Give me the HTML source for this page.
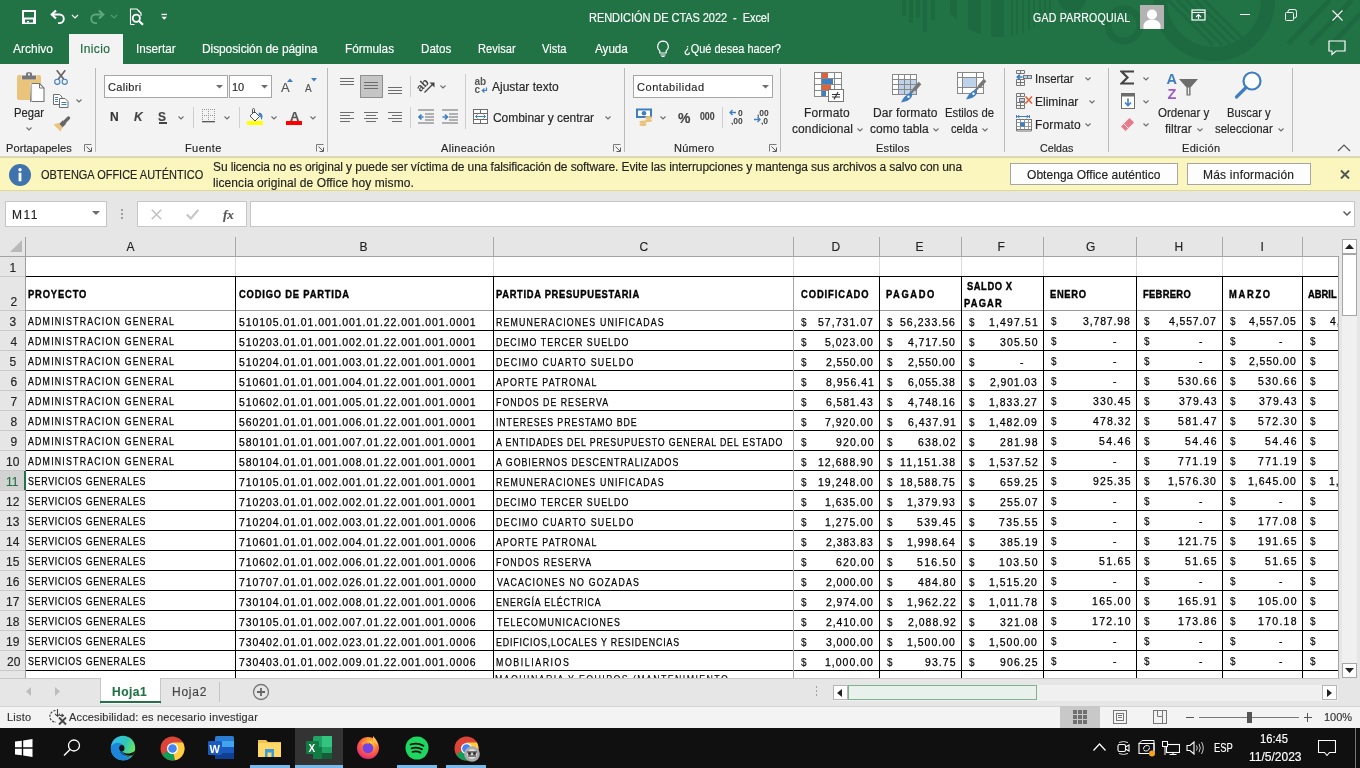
<!DOCTYPE html>
<html><head><meta charset="utf-8"><style>
html,body{margin:0;padding:0;width:1360px;height:768px;overflow:hidden;background:#fff;}
body{position:relative;font-family:"Liberation Sans",sans-serif;}
#root{position:absolute;left:0;top:0;width:1360px;height:768px;overflow:hidden;will-change:transform;}
#root>div,#root>span,#root>svg{position:absolute;box-sizing:border-box;}
span{white-space:pre;}
.k{-webkit-text-stroke:0.25px #000;}
span{-webkit-text-stroke:0.15px currentColor;}
.kb{-webkit-text-stroke:0.4px #000;}

</style></head><body><div id="root">
<div style="left:0px;top:0px;width:1360px;height:64px;background:#217346"></div>
<svg style="left:880px;top:0px;" width="480" height="64" viewBox="0 0 480 64"><rect x="22" y="0" width="4" height="16" fill="#1e6a40"/><rect x="29" y="0" width="4" height="23" fill="#1e6a40"/><rect x="36" y="0" width="4" height="17" fill="#1e6a40"/><rect x="43" y="0" width="4" height="32" fill="#1e6a40"/><rect x="51" y="0" width="4" height="20" fill="#1e6a40"/><defs><clipPath id="cp1"><circle cx="120" cy="-27" r="64"/></clipPath></defs><g clip-path="url(#cp1)"><rect x="70" y="0" width="7" height="40" fill="#1e6a40"/><rect x="88" y="0" width="13" height="40" fill="#1e6a40"/><rect x="111" y="0" width="13" height="40" fill="#1e6a40"/><rect x="131" y="0" width="2" height="40" fill="#1e6a40"/><rect x="136" y="0" width="2" height="40" fill="#1e6a40"/><rect x="142" y="0" width="2" height="40" fill="#1e6a40"/><rect x="148" y="0" width="2" height="40" fill="#1e6a40"/><rect x="153" y="0" width="2" height="40" fill="#1e6a40"/><rect x="159" y="0" width="2" height="40" fill="#1e6a40"/><rect x="164" y="0" width="2" height="40" fill="#1e6a40"/><rect x="169" y="0" width="2" height="40" fill="#1e6a40"/></g><circle cx="192" cy="-2" r="14" fill="#1e6a40"/><circle cx="244" cy="25" r="16" fill="none" stroke="#1e6a40" stroke-width="7"/><circle cx="334" cy="0" r="54" fill="none" stroke="#1e6a40" stroke-width="14"/><line x1="288" y1="0" x2="333" y2="45" stroke="#1e6a40" stroke-width="3"/><line x1="297" y1="0" x2="342" y2="45" stroke="#1e6a40" stroke-width="3"/><line x1="306" y1="0" x2="351" y2="45" stroke="#1e6a40" stroke-width="3"/><line x1="315" y1="0" x2="360" y2="45" stroke="#1e6a40" stroke-width="3"/><line x1="324" y1="0" x2="369" y2="45" stroke="#1e6a40" stroke-width="3"/><line x1="450" y1="0" x2="408" y2="44" stroke="#1e6a40" stroke-width="5"/><line x1="472" y1="0" x2="430" y2="44" stroke="#1e6a40" stroke-width="5"/><line x1="494" y1="0" x2="452" y2="44" stroke="#1e6a40" stroke-width="5"/></svg>
<svg style="left:22px;top:10px;" width="14" height="14" viewBox="0 0 14 14"><rect x="0" y="0" width="14" height="14" rx="0.5" fill="#fff"/><rect x="2" y="2" width="10" height="5.5" fill="#217346"/><rect x="3" y="9.5" width="8" height="3" fill="#217346"/><rect x="5" y="11" width="2" height="1.5" fill="#fff"/></svg>
<svg style="left:50px;top:9px;" width="16" height="15" viewBox="0 0 16 15"><path d="M3 5.5h6.5a4.3 4.3 0 0 1 0 8.6h-1.5" fill="none" stroke="#fff" stroke-width="1.9"/><path d="M6 1.5L1.8 5.5L6 9.5" fill="none" stroke="#fff" stroke-width="2.2"/></svg>
<svg style="left:71px;top:14px;" width="8" height="5" viewBox="0 0 8 5"><path d="M1 1l3 3l3-3" fill="none" stroke="#fff" stroke-width="1.2"/></svg>
<svg style="left:89px;top:9px;" width="16" height="15" viewBox="0 0 16 15"><path d="M13 5.5h-6.5a4.3 4.3 0 0 0 0 8.6h1.5" fill="none" stroke="#5ea77e" stroke-width="1.9"/><path d="M10 1.5L14.2 5.5L10 9.5" fill="none" stroke="#5ea77e" stroke-width="2.2"/></svg>
<svg style="left:110px;top:14px;" width="8" height="5" viewBox="0 0 8 5"><path d="M1 1l3 3l3-3" fill="none" stroke="#4f9a70" stroke-width="1.2"/></svg>
<svg style="left:129px;top:8px;" width="16" height="18" viewBox="0 0 16 18"><path d="M1.5 16.5v-15.5h6.5l4 4v3" fill="none" stroke="#fff" stroke-width="1.1"/><path d="M1.5 16.5h4" stroke="#fff" stroke-width="1.1"/><path d="M8.5 1.5l1.5 2.5M10 2.5l1.5 3" stroke="#fff" stroke-width="0.9"/><circle cx="7.3" cy="10.3" r="3.6" fill="none" stroke="#fff" stroke-width="1.8"/><path d="M10 13l4 3.8" stroke="#fff" stroke-width="2.2"/></svg>
<svg style="left:161px;top:13px;" width="7" height="8" viewBox="0 0 7 8"><rect x="0.5" y="0.8" width="5.5" height="1.3" fill="#fff"/><path d="M0.5 3.8h5.5l-2.75 3z" fill="#fff"/></svg>
<span style="left:589.08px;top:12px;font-size:12px;line-height:12px;color:#ffffff;letter-spacing:-0.079px;transform:scaleX(0.920);transform-origin:0 0;">RENDICIÓN DE CTAS 2022  -  Excel</span>
<span style="left:1033.00px;top:12px;font-size:12px;line-height:12px;color:#ffffff;letter-spacing:0.248px;transform:scaleX(0.880);transform-origin:0 0;">GAD PARROQUIAL</span>
<div style="left:1140px;top:5px;width:24px;height:24px;background:#b3b3b3"></div>
<svg style="left:1140px;top:5px;" width="24" height="24" viewBox="0 0 24 24"><circle cx="12" cy="9.5" r="5" fill="#fff"/><path d="M3.5 24v-3c0-4 4-6.5 8.5-6.5s8.5 2.5 8.5 6.5v3z" fill="#fff"/></svg>
<svg style="left:1191px;top:9px;" width="15" height="12" viewBox="0 0 15 12"><rect x="1" y="1" width="13" height="10" fill="none" stroke="#fff" stroke-width="1.2"/><path d="M1 3.5h13" stroke="#fff" stroke-width="1"/><path d="M7.5 10V5.5M5 8l2.5-2.5L10 8" fill="none" stroke="#fff" stroke-width="1.1"/></svg>
<div style="left:1240px;top:14px;width:10px;height:1px;background:#fff"></div>
<svg style="left:1285px;top:9px;" width="12" height="12" viewBox="0 0 12 12"><rect x="0.5" y="3.5" width="8" height="8" rx="1" fill="none" stroke="#fff" stroke-width="1"/><path d="M3 3.5v-1a2 2 0 0 1 2-2h4.5a2 2 0 0 1 2 2v4.5a2 2 0 0 1-2 2h-1" fill="none" stroke="#fff" stroke-width="1"/></svg>
<svg style="left:1332px;top:10px;" width="11" height="11" viewBox="0 0 11 11"><path d="M0.5 0.5l10 10M10.5 0.5l-10 10" stroke="#fff" stroke-width="1.1"/></svg>
<div style="left:69px;top:34px;width:54px;height:30px;background:#f3f3f3"></div>
<span style="left:13.00px;top:43px;font-size:12px;line-height:12px;color:#ffffff;">Archivo</span>
<span style="left:136.03px;top:43px;font-size:12px;line-height:12px;color:#ffffff;transform:scaleX(0.975);transform-origin:0 0;">Insertar</span>
<span style="left:202.00px;top:43px;font-size:12px;line-height:12px;color:#ffffff;letter-spacing:-0.100px;">Disposición de página</span>
<span style="left:345.02px;top:43px;font-size:12px;line-height:12px;color:#ffffff;transform:scaleX(0.980);transform-origin:0 0;">Fórmulas</span>
<span style="left:421.03px;top:43px;font-size:12px;line-height:12px;color:#ffffff;transform:scaleX(0.967);transform-origin:0 0;">Datos</span>
<span style="left:478.07px;top:43px;font-size:12px;line-height:12px;color:#ffffff;transform:scaleX(0.925);transform-origin:0 0;">Revisar</span>
<span style="left:542.00px;top:43px;font-size:12px;line-height:12px;color:#ffffff;transform:scaleX(0.926);transform-origin:0 0;">Vista</span>
<span style="left:595.00px;top:43px;font-size:12px;line-height:12px;color:#ffffff;transform:scaleX(0.971);transform-origin:0 0;">Ayuda</span>
<span style="left:80.00px;top:43px;font-size:12px;line-height:12px;color:#1e6b41;letter-spacing:0.400px;">Inicio</span>
<svg style="left:656px;top:40px;" width="14" height="17" viewBox="0 0 14 17"><path d="M7 1.2a5.3 5.3 0 0 0-3.2 9.5v2.3h6.4v-2.3A5.3 5.3 0 0 0 7 1.2z" fill="none" stroke="#fff" stroke-width="1.2"/><path d="M4.5 15h5M5.5 16.5h3" stroke="#fff" stroke-width="1.1"/></svg>
<span style="left:684.09px;top:43px;font-size:12px;line-height:12px;color:#ffffff;transform:scaleX(0.914);transform-origin:0 0;">¿Qué desea hacer?</span>
<svg style="left:1328px;top:40px;" width="18" height="16" viewBox="0 0 18 16"><path d="M1 1h16v10h-9l-4 3.5v-3.5h-3z" fill="none" stroke="#fff" stroke-width="1.2"/></svg>
<div style="left:0px;top:64px;width:1360px;height:92px;background:#f3f3f3"></div>
<div style="left:0px;top:156px;width:1360px;height:1px;background:#d5d5d5"></div>
<svg style="left:16px;top:71px;" width="30" height="32" viewBox="0 0 30 32"><rect x="1" y="4" width="24" height="25" rx="2" fill="#ebc47c"/><path d="M5.5 3.5h15v5h-15z" fill="#f3f3f3"/><path d="M6 4.5h14v4h-14z" fill="#777"/><rect x="10" y="1.2" width="6" height="4.5" rx="1.5" fill="#777"/><rect x="12" y="2.6" width="2" height="1.8" fill="#f3f3f3"/><path d="M15.5 12.5h8l4.5 4.5v13.5h-12.5z" fill="#fff" stroke="#777" stroke-width="1.1"/><path d="M23.5 12.5v4.5h4.5" fill="none" stroke="#777" stroke-width="1"/><path d="M15 12v19.5h-1" stroke="#f3f3f3" stroke-width="1"/></svg>
<span style="left:14.06px;top:107px;font-size:12px;line-height:12px;color:#262626;transform:scaleX(0.935);transform-origin:0 0;">Pegar</span>
<svg style="left:26px;top:127px;" width="6" height="4" viewBox="0 0 6 4"><path d="M0.5 0.5l2.5 2.5l2.5-2.5" fill="none" stroke="#6d6d6d" stroke-width="1.1"/></svg>
<svg style="left:53px;top:69px;" width="16" height="16" viewBox="0 0 16 16"><path d="M5.2 10.3L12.3 1.3M10.8 10.3L3.7 1.3" fill="none" stroke="#666" stroke-width="1.7"/><circle cx="4.3" cy="12.8" r="2.6" fill="none" stroke="#3f7fc0" stroke-width="1.1"/><circle cx="11.7" cy="12.8" r="2.6" fill="none" stroke="#3f7fc0" stroke-width="1.1"/></svg>
<svg style="left:53px;top:94px;" width="16" height="14" viewBox="0 0 16 14"><path d="M0.5 0.5h6l2.5 2.5v7.5h-8.5z" fill="#fff" stroke="#6d6d6d" stroke-width="1"/><path d="M6.5 4.5h5.5l3 3v6h-8.5z" fill="#fff" stroke="#6d6d6d" stroke-width="1"/><rect x="2" y="3" width="3" height="1" fill="#3f7fc0"/><rect x="2" y="5" width="3" height="1" fill="#3f7fc0"/><rect x="2" y="7" width="3" height="1" fill="#3f7fc0"/><rect x="8.5" y="8" width="5" height="1" fill="#3f7fc0"/><rect x="8.5" y="10" width="5" height="1" fill="#3f7fc0"/></svg>
<svg style="left:76px;top:99px;" width="6" height="4" viewBox="0 0 6 4"><path d="M0.5 0.5l2.5 2.5l2.5-2.5" fill="none" stroke="#6d6d6d" stroke-width="1.1"/></svg>
<svg style="left:53px;top:116px;" width="18" height="16" viewBox="0 0 18 16"><path d="M12 5.5L15.5 2" stroke="#666" stroke-width="3.2" stroke-linecap="round"/><path d="M7.5 10L11.5 6" stroke="#666" stroke-width="4.6"/><path d="M0.5 8.5L5.5 7L9.5 11L7.5 15.5z" fill="#ebc47c"/></svg>
<span style="left:6.00px;top:143px;font-size:11px;line-height:11px;color:#262626;letter-spacing:0.091px;">Portapapeles</span>
<svg style="left:84px;top:144px;" width="8" height="8" viewBox="0 0 8 8"><path d="M0.5 7.5V0.5h7" fill="none" stroke="#7a7a7a" stroke-width="1"/><path d="M2.5 2.5l4.5 4.5M7.5 3.5v4h-4" fill="none" stroke="#5a5a5a" stroke-width="1"/></svg>
<div style="left:95px;top:68px;width:1px;height:84px;background:#b9b9b9"></div>
<div style="left:104px;top:75px;width:124px;height:23px;background:#fff;border:1px solid #a6a6a6"></div>
<span style="left:108.00px;top:82px;font-size:11px;line-height:11px;color:#262626;letter-spacing:0.333px;">Calibri</span>
<svg style="left:216px;top:85px;" width="7" height="4" viewBox="0 0 7 4"><path d="M0 0h7l-3.5 3.5z" fill="#6d6d6d"/></svg>
<div style="left:229px;top:75px;width:43px;height:23px;background:#fff;border:1px solid #a6a6a6"></div>
<span style="left:232.00px;top:82px;font-size:11px;line-height:11px;color:#262626;">10</span>
<svg style="left:261px;top:85px;" width="7" height="4" viewBox="0 0 7 4"><path d="M0 0h7l-3.5 3.5z" fill="#6d6d6d"/></svg>
<span style="left:281.00px;top:81px;font-size:13px;line-height:13px;color:#555;">A</span>
<svg style="left:287px;top:78px;" width="7" height="4" viewBox="0 0 7 4"><path d="M0 4h6l-3-3.5z" fill="#3f7fc0"/></svg>
<span style="left:305.00px;top:84px;font-size:10px;line-height:10px;color:#555;">A</span>
<svg style="left:311px;top:78px;" width="7" height="4" viewBox="0 0 7 4"><path d="M0 0h6l-3 3.5z" fill="#3f7fc0"/></svg>
<span style="left:110.00px;top:111px;font-size:12px;line-height:12px;color:#333;font-weight:700;">N</span>
<span style="left:134.00px;top:111px;font-size:12px;line-height:12px;color:#444;font-weight:700;font-style:italic;">K</span>
<span style="left:158.00px;top:111px;font-size:12px;line-height:12px;color:#444;font-weight:700;">S</span>
<div style="left:159px;top:122px;width:8px;height:1.5px;background:#444"></div>
<svg style="left:178px;top:116px;" width="6" height="4" viewBox="0 0 6 4"><path d="M0.5 0.5l2.5 2.5l2.5-2.5" fill="none" stroke="#6d6d6d" stroke-width="1.1"/></svg>
<div style="left:193px;top:107px;width:1px;height:21px;background:#cfcfcf"></div>
<svg style="left:202px;top:109px;" width="13" height="14" viewBox="0 0 13 14"><rect x="0" y="0" width="1" height="1" fill="#9a9a9a"/><rect x="0" y="6" width="1" height="1" fill="#9a9a9a"/><rect x="2" y="0" width="1" height="1" fill="#9a9a9a"/><rect x="2" y="6" width="1" height="1" fill="#9a9a9a"/><rect x="4" y="0" width="1" height="1" fill="#9a9a9a"/><rect x="4" y="6" width="1" height="1" fill="#9a9a9a"/><rect x="6" y="0" width="1" height="1" fill="#9a9a9a"/><rect x="6" y="6" width="1" height="1" fill="#9a9a9a"/><rect x="8" y="0" width="1" height="1" fill="#9a9a9a"/><rect x="8" y="6" width="1" height="1" fill="#9a9a9a"/><rect x="10" y="0" width="1" height="1" fill="#9a9a9a"/><rect x="10" y="6" width="1" height="1" fill="#9a9a9a"/><rect x="12" y="0" width="1" height="1" fill="#9a9a9a"/><rect x="12" y="6" width="1" height="1" fill="#9a9a9a"/><rect x="0" y="2" width="1" height="1" fill="#9a9a9a"/><rect x="0" y="4" width="1" height="1" fill="#9a9a9a"/><rect x="0" y="6" width="1" height="1" fill="#9a9a9a"/><rect x="0" y="8" width="1" height="1" fill="#9a9a9a"/><rect x="0" y="10" width="1" height="1" fill="#9a9a9a"/><rect x="6" y="2" width="1" height="1" fill="#9a9a9a"/><rect x="6" y="4" width="1" height="1" fill="#9a9a9a"/><rect x="6" y="6" width="1" height="1" fill="#9a9a9a"/><rect x="6" y="8" width="1" height="1" fill="#9a9a9a"/><rect x="6" y="10" width="1" height="1" fill="#9a9a9a"/><rect x="12" y="2" width="1" height="1" fill="#9a9a9a"/><rect x="12" y="4" width="1" height="1" fill="#9a9a9a"/><rect x="12" y="6" width="1" height="1" fill="#9a9a9a"/><rect x="12" y="8" width="1" height="1" fill="#9a9a9a"/><rect x="12" y="10" width="1" height="1" fill="#9a9a9a"/><rect x="0" y="12" width="13" height="1.3" fill="#555"/></svg>
<svg style="left:224px;top:116px;" width="6" height="4" viewBox="0 0 6 4"><path d="M0.5 0.5l2.5 2.5l2.5-2.5" fill="none" stroke="#6d6d6d" stroke-width="1.1"/></svg>
<div style="left:239px;top:107px;width:1px;height:21px;background:#cfcfcf"></div>
<svg style="left:247px;top:108px;" width="17" height="13" viewBox="0 0 17 13"><path d="M7.5 3.5l5 5l-4.5 4.5l-5-5z" fill="#fff" stroke="#555" stroke-width="1"/><path d="M5.5 6V1.5q0-1 1-1t1 1v3.5" fill="none" stroke="#555" stroke-width="1"/><path d="M12 4.5q3.5 0.5 3.5 4q0 2-1.5 3.5q0.5-3-2.5-5.5z" fill="#3f7fc0"/></svg>
<div style="left:247px;top:121px;width:16px;height:4px;background:#ffff00"></div>
<svg style="left:271px;top:116px;" width="6" height="4" viewBox="0 0 6 4"><path d="M0.5 0.5l2.5 2.5l2.5-2.5" fill="none" stroke="#6d6d6d" stroke-width="1.1"/></svg>
<span style="left:290.00px;top:110px;font-size:13px;line-height:13px;color:#555;font-weight:700;">A</span>
<div style="left:286px;top:121px;width:16px;height:4px;background:#ff0000"></div>
<svg style="left:310px;top:116px;" width="6" height="4" viewBox="0 0 6 4"><path d="M0.5 0.5l2.5 2.5l2.5-2.5" fill="none" stroke="#6d6d6d" stroke-width="1.1"/></svg>
<span style="left:185.00px;top:143px;font-size:11px;line-height:11px;color:#262626;letter-spacing:0.400px;">Fuente</span>
<svg style="left:316px;top:144px;" width="8" height="8" viewBox="0 0 8 8"><path d="M0.5 7.5V0.5h7" fill="none" stroke="#7a7a7a" stroke-width="1"/><path d="M2.5 2.5l4.5 4.5M7.5 3.5v4h-4" fill="none" stroke="#5a5a5a" stroke-width="1"/></svg>
<div style="left:327px;top:68px;width:1px;height:84px;background:#b9b9b9"></div>
<div style="left:340px;top:78px;width:14px;height:1px;background:#6d6d6d"></div>
<div style="left:340px;top:81px;width:14px;height:1px;background:#6d6d6d"></div>
<div style="left:340px;top:84px;width:14px;height:1px;background:#6d6d6d"></div>
<div style="left:360px;top:75px;width:23px;height:23px;background:#c5c5c5;border:1px solid #8f8f8f"></div>
<div style="left:364px;top:82px;width:14px;height:1px;background:#6d6d6d"></div>
<div style="left:364px;top:85px;width:14px;height:1px;background:#6d6d6d"></div>
<div style="left:364px;top:88px;width:14px;height:1px;background:#6d6d6d"></div>
<div style="left:388px;top:87px;width:14px;height:1px;background:#6d6d6d"></div>
<div style="left:388px;top:90px;width:14px;height:1px;background:#6d6d6d"></div>
<div style="left:388px;top:93px;width:14px;height:1px;background:#6d6d6d"></div>
<div style="left:410px;top:76px;width:1px;height:21px;background:#cfcfcf"></div>
<svg style="left:414px;top:74px;" width="24" height="22" viewBox="0 0 24 22"><g transform="rotate(-45 9 10)"><text x="1.5" y="14" font-family="Liberation Sans" font-weight="bold" font-size="11" fill="#444">ab</text></g><path d="M10.5 18.5L19.5 9.5" stroke="#444" stroke-width="1.2"/><path d="M15.5 8.5h5v5z" fill="#444"/></svg>
<svg style="left:440px;top:85px;" width="6" height="4" viewBox="0 0 6 4"><path d="M0.5 0.5l2.5 2.5l2.5-2.5" fill="none" stroke="#6d6d6d" stroke-width="1.1"/></svg>
<div style="left:465px;top:74px;width:1px;height:55px;background:#cfcfcf"></div>
<div style="left:340px;top:112px;width:14px;height:1px;background:#6d6d6d"></div>
<div style="left:340px;top:115px;width:10px;height:1px;background:#6d6d6d"></div>
<div style="left:340px;top:118px;width:14px;height:1px;background:#6d6d6d"></div>
<div style="left:340px;top:121px;width:10px;height:1px;background:#6d6d6d"></div>
<div style="left:364px;top:112px;width:14px;height:1px;background:#6d6d6d"></div>
<div style="left:366px;top:115px;width:10px;height:1px;background:#6d6d6d"></div>
<div style="left:364px;top:118px;width:14px;height:1px;background:#6d6d6d"></div>
<div style="left:366px;top:121px;width:10px;height:1px;background:#6d6d6d"></div>
<div style="left:388px;top:112px;width:14px;height:1px;background:#6d6d6d"></div>
<div style="left:392px;top:115px;width:10px;height:1px;background:#6d6d6d"></div>
<div style="left:388px;top:118px;width:14px;height:1px;background:#6d6d6d"></div>
<div style="left:392px;top:121px;width:10px;height:1px;background:#6d6d6d"></div>
<div style="left:410px;top:107px;width:1px;height:21px;background:#cfcfcf"></div>
<svg style="left:418px;top:109px;" width="17" height="15" viewBox="0 0 17 15"><path d="M0 1h16M7 5h9M7 8h9M7 11h9M0 14h16" stroke="#6d6d6d" stroke-width="1"/><path d="M5.5 8H1M3.5 5.5L1 8l2.5 2.5" fill="none" stroke="#3f7fc0" stroke-width="1.6"/></svg>
<svg style="left:442px;top:109px;" width="17" height="15" viewBox="0 0 17 15"><path d="M0 1h16M7 5h9M7 8h9M7 11h9M0 14h16" stroke="#6d6d6d" stroke-width="1"/><path d="M0.5 8H5M3 5.5L5.5 8L3 10.5" fill="none" stroke="#3f7fc0" stroke-width="1.6"/></svg>
<svg style="left:474px;top:76px;" width="15" height="18" viewBox="0 0 15 18"><text x="0.5" y="9" font-family="Liberation Sans" font-weight="bold" font-size="10" fill="#555">ab</text><text x="0.5" y="16.8" font-family="Liberation Sans" font-weight="bold" font-size="10" fill="#555">c</text><path d="M12.5 11.5v3h-3.5" fill="none" stroke="#3f7fc0" stroke-width="1.2"/><path d="M10.5 12.5l-2.2 2l2.2 2" fill="none" stroke="#3f7fc0" stroke-width="1.2"/></svg>
<span style="left:492.00px;top:81px;font-size:12px;line-height:12px;color:#262626;">Ajustar texto</span>
<svg style="left:473px;top:109px;" width="15" height="15" viewBox="0 0 15 15"><rect x="0.5" y="0.5" width="14" height="14" fill="#fff" stroke="#6d6d6d" stroke-width="1"/><path d="M0.5 4.5h14M0.5 10.5h14M7.5 0.5v4M7.5 10.5v4" stroke="#6d6d6d" stroke-width="1"/><path d="M2.5 7.5h10M4.5 5.5l-2 2l2 2M10.5 5.5l2 2l-2 2" fill="none" stroke="#3f7fc0" stroke-width="1"/></svg>
<span style="left:493.00px;top:112px;font-size:12px;line-height:12px;color:#262626;letter-spacing:-0.059px;">Combinar y centrar</span>
<svg style="left:605px;top:116px;" width="6" height="4" viewBox="0 0 6 4"><path d="M0.5 0.5l2.5 2.5l2.5-2.5" fill="none" stroke="#6d6d6d" stroke-width="1.1"/></svg>
<span style="left:441.00px;top:143px;font-size:11px;line-height:11px;color:#262626;letter-spacing:0.333px;">Alineación</span>
<svg style="left:613px;top:144px;" width="8" height="8" viewBox="0 0 8 8"><path d="M0.5 7.5V0.5h7" fill="none" stroke="#7a7a7a" stroke-width="1"/><path d="M2.5 2.5l4.5 4.5M7.5 3.5v4h-4" fill="none" stroke="#5a5a5a" stroke-width="1"/></svg>
<div style="left:624px;top:68px;width:1px;height:84px;background:#b9b9b9"></div>
<div style="left:633px;top:75px;width:140px;height:23px;background:#fff;border:1px solid #a6a6a6"></div>
<span style="left:637.00px;top:82px;font-size:11px;line-height:11px;color:#262626;letter-spacing:0.545px;">Contabilidad</span>
<svg style="left:762px;top:85px;" width="7" height="4" viewBox="0 0 7 4"><path d="M0 0h7l-3.5 3.5z" fill="#6d6d6d"/></svg>
<svg style="left:636px;top:108px;" width="17" height="18" viewBox="0 0 17 18"><rect x="0" y="0.5" width="16" height="9.5" fill="#3f7fc0"/><rect x="2" y="2.5" width="12" height="5.5" fill="#fff"/><circle cx="8" cy="5.2" r="2.3" fill="#3f7fc0"/><ellipse cx="12.5" cy="9.5" rx="3.5" ry="1.5" fill="#ebc27a"/><ellipse cx="12.5" cy="12.5" rx="3.5" ry="1.5" fill="#ebc27a"/><ellipse cx="7" cy="14" rx="3.5" ry="1.5" fill="#ebc27a"/><ellipse cx="7" cy="16.5" rx="3.5" ry="1.5" fill="#ebc27a"/></svg>
<svg style="left:660px;top:116px;" width="6" height="4" viewBox="0 0 6 4"><path d="M0.5 0.5l2.5 2.5l2.5-2.5" fill="none" stroke="#6d6d6d" stroke-width="1.1"/></svg>
<span style="left:678.00px;top:111px;font-size:14px;line-height:14px;color:#444;font-weight:700;">%</span>
<span style="left:700.00px;top:112px;font-size:10px;line-height:10px;color:#444;font-weight:700;transform:scaleX(0.875);transform-origin:0 0;">000</span>
<div style="left:722px;top:107px;width:1px;height:21px;background:#cfcfcf"></div>
<svg style="left:729px;top:109px;" width="16" height="16" viewBox="0 0 16 16"><text x="9" y="7" font-family="Liberation Sans" font-weight="bold" font-size="8.5" fill="#444">0</text><text x="2" y="14.5" font-family="Liberation Sans" font-weight="bold" font-size="8.5" fill="#444">,00</text><path d="M7 3.5H1M3.5 1L1 3.5L3.5 6" fill="none" stroke="#3f7fc0" stroke-width="1.3"/></svg>
<svg style="left:753px;top:109px;" width="16" height="16" viewBox="0 0 16 16"><text x="4" y="7" font-family="Liberation Sans" font-weight="bold" font-size="8.5" fill="#444">,00</text><text x="8" y="14.5" font-family="Liberation Sans" font-weight="bold" font-size="8.5" fill="#444">,0</text><path d="M1 10.5h6M4.5 8L7 10.5L4.5 13" fill="none" stroke="#3f7fc0" stroke-width="1.3"/></svg>
<span style="left:674.00px;top:143px;font-size:11px;line-height:11px;color:#262626;letter-spacing:0.200px;">Número</span>
<svg style="left:769px;top:144px;" width="8" height="8" viewBox="0 0 8 8"><path d="M0.5 7.5V0.5h7" fill="none" stroke="#7a7a7a" stroke-width="1"/><path d="M2.5 2.5l4.5 4.5M7.5 3.5v4h-4" fill="none" stroke="#5a5a5a" stroke-width="1"/></svg>
<div style="left:780px;top:68px;width:1px;height:84px;background:#b9b9b9"></div>
<svg style="left:814px;top:72px;" width="31" height="31" viewBox="0 0 31 31"><rect x="0.5" y="0.5" width="27" height="24" fill="#fff" stroke="#888"/><path d="M7.5 0.5v24M20.5 0.5v24M0.5 6.5h27M0.5 12.5h27M0.5 18.5h27" stroke="#888"/><rect x="8" y="1" width="6" height="5" fill="#e0623b"/><rect x="8" y="7" width="11" height="5" fill="#3f7fc0"/><rect x="8" y="13" width="9" height="5" fill="#e0623b"/><rect x="8" y="19" width="4" height="5" fill="#3f7fc0"/><rect x="14.5" y="17.5" width="15" height="12" fill="#fff" stroke="#777"/><path d="M18 22.5h8M18 25h8M24 20l-4 7.5" stroke="#333" stroke-width="1.1"/></svg>
<span style="left:804.00px;top:107px;font-size:12px;line-height:12px;color:#262626;letter-spacing:0.167px;">Formato</span>
<span style="left:792.00px;top:123px;font-size:12px;line-height:12px;color:#262626;letter-spacing:0.100px;">condicional</span>
<svg style="left:857px;top:128px;" width="6" height="4" viewBox="0 0 6 4"><path d="M0.5 0.5l2.5 2.5l2.5-2.5" fill="none" stroke="#6d6d6d" stroke-width="1.1"/></svg>
<svg style="left:892px;top:74px;" width="31" height="30" viewBox="0 0 31 30"><rect x="0.5" y="0.5" width="24" height="20" fill="#fff" stroke="#888"/><rect x="7" y="5.5" width="17" height="14.5" fill="#bcd3ea"/><path d="M6.5 0.5v20M12.5 0.5v20M18.5 0.5v20M0.5 5.5h24M0.5 10.5h24M0.5 15.5h24" stroke="#888"/><path d="M22 16L28 9" stroke="#777" stroke-width="3.5"/><path d="M18 20L22 15.5" stroke="#777" stroke-width="2.2"/><path d="M18.5 18.5q3 2 0.5 5.5q-3 3.5-10 4.5q3-7 9.5-10z" fill="#3f7fc0"/><circle cx="16.5" cy="22.8" r="1.2" fill="#fff"/></svg>
<span style="left:873.00px;top:107px;font-size:12px;line-height:12px;color:#262626;letter-spacing:0.100px;">Dar formato</span>
<span style="left:870.00px;top:123px;font-size:12px;line-height:12px;color:#262626;">como tabla</span>
<svg style="left:933px;top:128px;" width="6" height="4" viewBox="0 0 6 4"><path d="M0.5 0.5l2.5 2.5l2.5-2.5" fill="none" stroke="#6d6d6d" stroke-width="1.1"/></svg>
<svg style="left:957px;top:72px;" width="31" height="30" viewBox="0 0 31 30"><rect x="0.5" y="0.5" width="26" height="21" fill="#fff" stroke="#888"/><rect x="6" y="5" width="14" height="10" fill="#bcd3ea"/><path d="M5.5 0.5v21M19.5 0.5v21M0.5 5.5h26M0.5 15.5h26" stroke="#888"/><path d="M22 15L28 8" stroke="#777" stroke-width="3.5"/><path d="M18 19L22 14.5" stroke="#777" stroke-width="2.2"/><path d="M18.5 17.5q3 2 0.5 5.5q-3 3.5-10 4.5q3-7 9.5-10z" fill="#3f7fc0"/><circle cx="16.5" cy="21.8" r="1.2" fill="#fff"/></svg>
<span style="left:945.06px;top:107px;font-size:12px;line-height:12px;color:#262626;transform:scaleX(0.941);transform-origin:0 0;">Estilos de</span>
<span style="left:951.00px;top:123px;font-size:12px;line-height:12px;color:#262626;transform:scaleX(0.931);transform-origin:0 0;">celda</span>
<svg style="left:982px;top:128px;" width="6" height="4" viewBox="0 0 6 4"><path d="M0.5 0.5l2.5 2.5l2.5-2.5" fill="none" stroke="#6d6d6d" stroke-width="1.1"/></svg>
<span style="left:876.00px;top:143px;font-size:11px;line-height:11px;color:#262626;letter-spacing:0.167px;">Estilos</span>
<div style="left:1004px;top:68px;width:1px;height:84px;background:#b9b9b9"></div>
<svg style="left:1016px;top:70px;" width="17" height="17" viewBox="0 0 17 17"><path d="M0.5 0.5h8v3h-8zM4.5 0.5v3M0.5 9.5h8v6h-8zM0.5 12.5h8M4.5 9.5v6" fill="none" stroke="#777"/><rect x="7.5" y="5.5" width="8" height="3" fill="#bcd3ea" stroke="#777"/><path d="M11.5 5.5v3" stroke="#777"/><path d="M6.5 7H1.5M3.8 4.6L1.3 7l2.5 2.4" fill="none" stroke="#3f7fc0" stroke-width="1.7"/></svg>
<span style="left:1035.05px;top:73px;font-size:12px;line-height:12px;color:#262626;transform:scaleX(0.950);transform-origin:0 0;">Insertar</span>
<svg style="left:1085px;top:77px;" width="6" height="4" viewBox="0 0 6 4"><path d="M0.5 0.5l2.5 2.5l2.5-2.5" fill="none" stroke="#6d6d6d" stroke-width="1.1"/></svg>
<svg style="left:1016px;top:93px;" width="17" height="17" viewBox="0 0 17 17"><path d="M0.5 0.5h8v3h-8zM4.5 0.5v3M0.5 9.5h8v6h-8zM0.5 12.5h8M4.5 9.5v6M0.5 3.5v6" fill="none" stroke="#777"/><rect x="3.5" y="5.5" width="5" height="3" fill="#bcd3ea" stroke="#777"/><path d="M9.5 3.5l6.5 7M16 3.5l-6.5 7" stroke="#e0623b" stroke-width="1.6"/></svg>
<span style="left:1035.00px;top:96px;font-size:12px;line-height:12px;color:#262626;">Eliminar</span>
<svg style="left:1089px;top:100px;" width="6" height="4" viewBox="0 0 6 4"><path d="M0.5 0.5l2.5 2.5l2.5-2.5" fill="none" stroke="#6d6d6d" stroke-width="1.1"/></svg>
<svg style="left:1016px;top:115px;" width="17" height="17" viewBox="0 0 17 17"><path d="M0.5 0v3M13.5 0v3M1 1.5h12M3.5 0l-2 1.5l2 1.5M10.5 0l2 1.5l-2 1.5" fill="none" stroke="#3f7fc0" stroke-width="1"/><rect x="0.5" y="4.5" width="15" height="10" fill="#fff" stroke="#777"/><path d="M0.5 7.5h15M0.5 11.5h15M4.5 4.5v10M8.5 4.5v10M12.5 4.5v10" stroke="#999"/><rect x="4" y="7.5" width="5" height="4" fill="#3f7fc0"/><path d="M0.5 14.5v1.5h15v-1.5" fill="none" stroke="#777"/></svg>
<span style="left:1035.00px;top:119px;font-size:12px;line-height:12px;color:#262626;letter-spacing:0.167px;">Formato</span>
<svg style="left:1085px;top:123px;" width="6" height="4" viewBox="0 0 6 4"><path d="M0.5 0.5l2.5 2.5l2.5-2.5" fill="none" stroke="#6d6d6d" stroke-width="1.1"/></svg>
<span style="left:1040.00px;top:143px;font-size:11px;line-height:11px;color:#262626;transform:scaleX(0.971);transform-origin:0 0;">Celdas</span>
<div style="left:1108px;top:68px;width:1px;height:84px;background:#b9b9b9"></div>
<svg style="left:1120px;top:70px;" width="15" height="15" viewBox="0 0 15 15"><path d="M14 1.5H1.5l6 6l-6 6H14" fill="none" stroke="#444" stroke-width="2.2"/></svg>
<svg style="left:1143px;top:77px;" width="6" height="4" viewBox="0 0 6 4"><path d="M0.5 0.5l2.5 2.5l2.5-2.5" fill="none" stroke="#6d6d6d" stroke-width="1.1"/></svg>
<svg style="left:1121px;top:93px;" width="14" height="16" viewBox="0 0 14 16"><rect x="0.5" y="0.5" width="13" height="15" fill="#fff" stroke="#6d6d6d"/><rect x="0.5" y="0.5" width="13" height="3" fill="#6d6d6d"/><path d="M7 5.5v7M4 9.5l3 3l3-3" fill="none" stroke="#3f7fc0" stroke-width="1.6"/></svg>
<svg style="left:1143px;top:100px;" width="6" height="4" viewBox="0 0 6 4"><path d="M0.5 0.5l2.5 2.5l2.5-2.5" fill="none" stroke="#6d6d6d" stroke-width="1.1"/></svg>
<svg style="left:1120px;top:116px;" width="15" height="15" viewBox="0 0 15 15"><path d="M1 10.5L9.5 2L14 6.5L5.5 15z" fill="#e9788a"/><path d="M3.8 7.7L8.3 12.2" stroke="#f3f3f3" stroke-width="1"/></svg>
<svg style="left:1143px;top:123px;" width="6" height="4" viewBox="0 0 6 4"><path d="M0.5 0.5l2.5 2.5l2.5-2.5" fill="none" stroke="#6d6d6d" stroke-width="1.1"/></svg>
<svg style="left:1166px;top:71px;" width="33" height="30" viewBox="0 0 33 30"><text x="0.5" y="13" font-family="Liberation Sans" font-weight="bold" font-size="14.5" fill="#3f7fc0">A</text><text x="1.5" y="27.5" font-family="Liberation Sans" font-weight="bold" font-size="14.5" fill="#9b59c9">Z</text><path d="M13 8h19l-7.5 8.5v8h-4v-8z" fill="#6d6d6d"/><path d="M22.5 16.5v7" stroke="#f3f3f3" stroke-width="1.3"/></svg>
<span style="left:1158.00px;top:107px;font-size:12px;line-height:12px;color:#262626;transform:scaleX(0.962);transform-origin:0 0;">Ordenar y</span>
<span style="left:1165.00px;top:123px;font-size:12px;line-height:12px;color:#262626;">filtrar</span>
<svg style="left:1197px;top:128px;" width="6" height="4" viewBox="0 0 6 4"><path d="M0.5 0.5l2.5 2.5l2.5-2.5" fill="none" stroke="#6d6d6d" stroke-width="1.1"/></svg>
<svg style="left:1234px;top:71px;" width="29" height="29" viewBox="0 0 29 29"><circle cx="18" cy="10" r="8.5" fill="#fff" stroke="#3f7fc0" stroke-width="2.2"/><path d="M12 16.5L2.5 26" stroke="#3f7fc0" stroke-width="3.2" stroke-linecap="round"/></svg>
<span style="left:1227.07px;top:107px;font-size:12px;line-height:12px;color:#262626;transform:scaleX(0.935);transform-origin:0 0;">Buscar y</span>
<span style="left:1215.00px;top:123px;font-size:12px;line-height:12px;color:#262626;transform:scaleX(0.951);transform-origin:0 0;">seleccionar</span>
<svg style="left:1278px;top:128px;" width="6" height="4" viewBox="0 0 6 4"><path d="M0.5 0.5l2.5 2.5l2.5-2.5" fill="none" stroke="#6d6d6d" stroke-width="1.1"/></svg>
<span style="left:1182.00px;top:143px;font-size:11px;line-height:11px;color:#262626;letter-spacing:0.333px;">Edición</span>
<div style="left:1292px;top:68px;width:1px;height:84px;background:#b9b9b9"></div>
<svg style="left:1337px;top:144px;" width="14" height="8" viewBox="0 0 14 8"><path d="M1 7l6-6l6 6" fill="none" stroke="#555" stroke-width="1.2"/></svg>
<div style="left:0px;top:157px;width:1360px;height:34px;background:#fbf6bd;border-top:1px solid #e0da8a;border-bottom:1px solid #e0da8a"></div>
<svg style="left:9px;top:164px;" width="22" height="22" viewBox="0 0 22 22"><circle cx="11" cy="11" r="11" fill="#3f73ae"/><circle cx="11" cy="5.8" r="1.7" fill="#fff"/><rect x="9.6" y="8.8" width="2.8" height="8.5" fill="#fff"/></svg>
<span style="left:41.00px;top:169px;font-size:12px;line-height:12px;color:#222;transform:scaleX(0.915);transform-origin:0 0;">OBTENGA OFFICE AUTÉNTICO</span>
<span style="left:213.00px;top:161px;font-size:12px;line-height:12px;color:#222;letter-spacing:-0.111px;">Su licencia no es original y puede ser víctima de una falsificación de software. Evite las interrupciones y mantenga sus archivos a salvo con una</span>
<span style="left:213.00px;top:177px;font-size:12px;line-height:12px;color:#222;letter-spacing:0.081px;">licencia original de Office hoy mismo.</span>
<div style="left:1010px;top:163px;width:168px;height:22px;background:#fdfdfd;border:1px solid #a6a6a6"></div>
<span style="left:1027.00px;top:169px;font-size:12px;line-height:12px;color:#222;letter-spacing:0.043px;">Obtenga Office auténtico</span>
<div style="left:1187px;top:163px;width:124px;height:22px;background:#fdfdfd;border:1px solid #a6a6a6"></div>
<span style="left:1203.00px;top:169px;font-size:12px;line-height:12px;color:#222;letter-spacing:0.214px;">Más información</span>
<svg style="left:1340px;top:170px;" width="10" height="9" viewBox="0 0 10 9"><path d="M1 0.5l8 8M9 0.5l-8 8" stroke="#555" stroke-width="2"/></svg>
<div style="left:0px;top:191px;width:1360px;height:46px;background:#e6e6e6"></div>
<div style="left:5px;top:201px;width:102px;height:26px;background:#fff;border:1px solid #c6c6c6"></div>
<span style="left:12.00px;top:209px;font-size:12px;line-height:12px;color:#222;letter-spacing:1.500px;">M11</span>
<svg style="left:92px;top:211px;" width="8" height="4" viewBox="0 0 8 4"><path d="M0 0h8l-4 4z" fill="#6d6d6d"/></svg>
<div style="left:121px;top:209px;width:2px;height:2px;background:#a0a0a0"></div>
<div style="left:121px;top:213px;width:2px;height:2px;background:#a0a0a0"></div>
<div style="left:121px;top:217px;width:2px;height:2px;background:#a0a0a0"></div>
<div style="left:137px;top:201px;width:110px;height:26px;background:#fff;border:1px solid #c6c6c6"></div>
<svg style="left:151px;top:209px;" width="11" height="11" viewBox="0 0 11 11"><path d="M0.8 0.8l9.4 9.4M10.2 0.8l-9.4 9.4" stroke="#c2c2c2" stroke-width="1.6"/></svg>
<svg style="left:186px;top:209px;" width="13" height="11" viewBox="0 0 13 11"><path d="M0.8 5.5l4 4l7.5-8.5" fill="none" stroke="#c6c6c6" stroke-width="2.2"/></svg>
<span style="left:223.00px;top:208px;font-size:13px;line-height:13px;color:#555;font-weight:700;font-family:'Liberation Serif';font-style:italic;">fx</span>
<div style="left:250px;top:201px;width:1105px;height:26px;background:#fff;border:1px solid #c6c6c6"></div>
<svg style="left:1343px;top:211px;" width="8" height="5" viewBox="0 0 8 5"><path d="M0.5 0.5l3.5 3.5l3.5-3.5" fill="none" stroke="#555" stroke-width="1.4"/></svg>
<div style="left:0px;top:237px;width:1360px;height:19px;background:#e6e6e6"></div>
<div style="left:0px;top:256px;width:25px;height:422px;background:#e6e6e6"></div>
<div style="left:26px;top:257px;width:1312px;height:421px;background:#fff"></div>
<svg style="left:10px;top:240px;" width="12" height="12" viewBox="0 0 12 12"><path d="M12 0v12H0z" fill="#b9b9b9"/></svg>
<div style="left:25px;top:237px;width:1px;height:19px;background:#a9a9a9"></div>
<div style="left:235px;top:237px;width:1px;height:19px;background:#a9a9a9"></div>
<div style="left:493px;top:237px;width:1px;height:19px;background:#a9a9a9"></div>
<div style="left:793px;top:237px;width:1px;height:19px;background:#a9a9a9"></div>
<div style="left:879px;top:237px;width:1px;height:19px;background:#a9a9a9"></div>
<div style="left:961px;top:237px;width:1px;height:19px;background:#a9a9a9"></div>
<div style="left:1043px;top:237px;width:1px;height:19px;background:#a9a9a9"></div>
<div style="left:1136px;top:237px;width:1px;height:19px;background:#a9a9a9"></div>
<div style="left:1222px;top:237px;width:1px;height:19px;background:#a9a9a9"></div>
<div style="left:1302px;top:237px;width:1px;height:19px;background:#a9a9a9"></div>
<div style="left:0px;top:256px;width:1338px;height:1px;background:#a3a3a3"></div>
<span style="left:126.50px;top:241px;font-size:12px;line-height:12px;color:#222;">A</span>
<span style="left:359.50px;top:241px;font-size:12px;line-height:12px;color:#222;">B</span>
<span style="left:639.50px;top:241px;font-size:12px;line-height:12px;color:#222;">C</span>
<span style="left:831.50px;top:241px;font-size:12px;line-height:12px;color:#222;">D</span>
<span style="left:915.50px;top:241px;font-size:12px;line-height:12px;color:#222;">E</span>
<span style="left:997.50px;top:241px;font-size:12px;line-height:12px;color:#222;">F</span>
<span style="left:1086.00px;top:241px;font-size:12px;line-height:12px;color:#222;">G</span>
<span style="left:1174.50px;top:241px;font-size:12px;line-height:12px;color:#222;">H</span>
<span style="left:1260.50px;top:241px;font-size:12px;line-height:12px;color:#222;">I</span>
<div style="left:25px;top:237px;width:1px;height:441px;background:#9e9e9e"></div>
<div style="left:0px;top:276px;width:25px;height:1px;background:#c9c9c9"></div>
<div style="left:0px;top:310px;width:25px;height:1px;background:#c9c9c9"></div>
<div style="left:0px;top:330px;width:25px;height:1px;background:#c9c9c9"></div>
<div style="left:0px;top:350px;width:25px;height:1px;background:#c9c9c9"></div>
<div style="left:0px;top:370px;width:25px;height:1px;background:#c9c9c9"></div>
<div style="left:0px;top:390px;width:25px;height:1px;background:#c9c9c9"></div>
<div style="left:0px;top:410px;width:25px;height:1px;background:#c9c9c9"></div>
<div style="left:0px;top:430px;width:25px;height:1px;background:#c9c9c9"></div>
<div style="left:0px;top:450px;width:25px;height:1px;background:#c9c9c9"></div>
<div style="left:0px;top:470px;width:25px;height:1px;background:#c9c9c9"></div>
<div style="left:0px;top:490px;width:25px;height:1px;background:#c9c9c9"></div>
<div style="left:0px;top:510px;width:25px;height:1px;background:#c9c9c9"></div>
<div style="left:0px;top:530px;width:25px;height:1px;background:#c9c9c9"></div>
<div style="left:0px;top:550px;width:25px;height:1px;background:#c9c9c9"></div>
<div style="left:0px;top:570px;width:25px;height:1px;background:#c9c9c9"></div>
<div style="left:0px;top:590px;width:25px;height:1px;background:#c9c9c9"></div>
<div style="left:0px;top:610px;width:25px;height:1px;background:#c9c9c9"></div>
<div style="left:0px;top:630px;width:25px;height:1px;background:#c9c9c9"></div>
<div style="left:0px;top:650px;width:25px;height:1px;background:#c9c9c9"></div>
<div style="left:0px;top:670px;width:25px;height:1px;background:#c9c9c9"></div>
<div style="left:0px;top:690px;width:25px;height:1px;background:#c9c9c9"></div>
<div style="left:0px;top:471px;width:25px;height:19px;background:#d2d2d2"></div>
<div style="left:24px;top:471px;width:2px;height:19px;background:#217346"></div>
<span style="left:9.50px;top:262px;font-size:12px;line-height:12px;color:#222;">1</span>
<span style="left:10.50px;top:296px;font-size:12px;line-height:12px;color:#222;">2</span>
<span style="left:9.50px;top:316px;font-size:12px;line-height:12px;color:#222;">3</span>
<span style="left:10.50px;top:336px;font-size:12px;line-height:12px;color:#222;">4</span>
<span style="left:9.50px;top:356px;font-size:12px;line-height:12px;color:#222;">5</span>
<span style="left:10.50px;top:376px;font-size:12px;line-height:12px;color:#222;">6</span>
<span style="left:10.50px;top:396px;font-size:12px;line-height:12px;color:#222;">7</span>
<span style="left:10.50px;top:416px;font-size:12px;line-height:12px;color:#222;">8</span>
<span style="left:10.50px;top:436px;font-size:12px;line-height:12px;color:#222;">9</span>
<span style="left:6.00px;top:456px;font-size:12px;line-height:12px;color:#222;">10</span>
<span style="left:6.00px;top:476px;font-size:12px;line-height:12px;color:#217346;">11</span>
<span style="left:6.00px;top:496px;font-size:12px;line-height:12px;color:#222;">12</span>
<span style="left:6.00px;top:516px;font-size:12px;line-height:12px;color:#222;">13</span>
<span style="left:6.00px;top:536px;font-size:12px;line-height:12px;color:#222;">14</span>
<span style="left:6.00px;top:556px;font-size:12px;line-height:12px;color:#222;">15</span>
<span style="left:6.00px;top:576px;font-size:12px;line-height:12px;color:#222;">16</span>
<span style="left:6.00px;top:596px;font-size:12px;line-height:12px;color:#222;">17</span>
<span style="left:6.00px;top:616px;font-size:12px;line-height:12px;color:#222;">18</span>
<span style="left:6.00px;top:636px;font-size:12px;line-height:12px;color:#222;">19</span>
<span style="left:7.00px;top:656px;font-size:12px;line-height:12px;color:#222;">20</span>
<div style="left:235px;top:257px;width:1px;height:19px;background:#dadada"></div>
<div style="left:493px;top:257px;width:1px;height:19px;background:#dadada"></div>
<div style="left:793px;top:257px;width:1px;height:19px;background:#dadada"></div>
<div style="left:879px;top:257px;width:1px;height:19px;background:#dadada"></div>
<div style="left:961px;top:257px;width:1px;height:19px;background:#dadada"></div>
<div style="left:1043px;top:257px;width:1px;height:19px;background:#dadada"></div>
<div style="left:1136px;top:257px;width:1px;height:19px;background:#dadada"></div>
<div style="left:1222px;top:257px;width:1px;height:19px;background:#dadada"></div>
<div style="left:1302px;top:257px;width:1px;height:19px;background:#dadada"></div>
<div style="left:26px;top:276px;width:1312px;height:1px;background:#000"></div>
<div style="left:26px;top:310px;width:1312px;height:1px;background:#9a9a9a"></div>
<div style="left:26px;top:330px;width:1312px;height:1px;background:#000"></div>
<div style="left:26px;top:350px;width:1312px;height:1px;background:#000"></div>
<div style="left:26px;top:370px;width:1312px;height:1px;background:#000"></div>
<div style="left:26px;top:390px;width:1312px;height:1px;background:#000"></div>
<div style="left:26px;top:410px;width:1312px;height:1px;background:#000"></div>
<div style="left:26px;top:430px;width:1312px;height:1px;background:#000"></div>
<div style="left:26px;top:450px;width:1312px;height:1px;background:#000"></div>
<div style="left:26px;top:470px;width:1312px;height:1px;background:#000"></div>
<div style="left:26px;top:490px;width:1312px;height:1px;background:#000"></div>
<div style="left:26px;top:510px;width:1312px;height:1px;background:#000"></div>
<div style="left:26px;top:530px;width:1312px;height:1px;background:#000"></div>
<div style="left:26px;top:550px;width:1312px;height:1px;background:#000"></div>
<div style="left:26px;top:570px;width:1312px;height:1px;background:#000"></div>
<div style="left:26px;top:590px;width:1312px;height:1px;background:#000"></div>
<div style="left:26px;top:610px;width:1312px;height:1px;background:#000"></div>
<div style="left:26px;top:630px;width:1312px;height:1px;background:#000"></div>
<div style="left:26px;top:650px;width:1312px;height:1px;background:#000"></div>
<div style="left:26px;top:670px;width:1312px;height:1px;background:#000"></div>
<div style="left:26px;top:690px;width:1312px;height:1px;background:#000"></div>
<div style="left:235px;top:277px;width:1px;height:401px;background:#000"></div>
<div style="left:493px;top:277px;width:1px;height:401px;background:#000"></div>
<div style="left:793px;top:277px;width:1px;height:401px;background:#a6a6a6"></div>
<div style="left:879px;top:277px;width:1px;height:401px;background:#000"></div>
<div style="left:961px;top:277px;width:1px;height:401px;background:#000"></div>
<div style="left:1043px;top:277px;width:1px;height:401px;background:#000"></div>
<div style="left:1136px;top:277px;width:1px;height:401px;background:#000"></div>
<div style="left:1222px;top:277px;width:1px;height:401px;background:#000"></div>
<div style="left:1302px;top:277px;width:1px;height:401px;background:#000"></div>
<span class="kb" style="left:28.15px;top:289px;font-size:11px;line-height:11px;color:#000;font-weight:700;letter-spacing:1.008px;transform:scaleX(0.850);transform-origin:0 0;">PROYECTO</span>
<span class="kb" style="left:239.00px;top:289px;font-size:11px;line-height:11px;color:#000;font-weight:700;letter-spacing:0.963px;transform:scaleX(0.850);transform-origin:0 0;">CODIGO DE PARTIDA</span>
<span class="kb" style="left:496.15px;top:289px;font-size:11px;line-height:11px;color:#000;font-weight:700;letter-spacing:0.812px;transform:scaleX(0.850);transform-origin:0 0;">PARTIDA PRESUPUESTARIA</span>
<span class="kb" style="left:801.00px;top:289px;font-size:11px;line-height:11px;color:#000;font-weight:700;letter-spacing:1.092px;transform:scaleX(0.850);transform-origin:0 0;">CODIFICADO</span>
<span class="kb" style="left:886.15px;top:289px;font-size:11px;line-height:11px;color:#000;font-weight:700;letter-spacing:1.859px;transform:scaleX(0.850);transform-origin:0 0;">PAGADO</span>
<span class="kb" style="left:1050.15px;top:289px;font-size:11px;line-height:11px;color:#000;font-weight:700;letter-spacing:0.794px;transform:scaleX(0.850);transform-origin:0 0;">ENERO</span>
<span class="kb" style="left:1143.15px;top:289px;font-size:11px;line-height:11px;color:#000;font-weight:700;letter-spacing:0.382px;transform:scaleX(0.850);transform-origin:0 0;">FEBRERO</span>
<span class="kb" style="left:1229.15px;top:289px;font-size:11px;line-height:11px;color:#000;font-weight:700;letter-spacing:2.015px;transform:scaleX(0.850);transform-origin:0 0;">MARZO</span>
<span class="kb" style="left:1308.00px;top:289px;font-size:11px;line-height:11px;color:#000;font-weight:700;letter-spacing:0.029px;transform:scaleX(0.850);transform-origin:0 0;">ABRIL</span>
<span class="kb" style="left:967.00px;top:281px;font-size:11px;line-height:11px;color:#000;font-weight:700;letter-spacing:0.657px;transform:scaleX(0.850);transform-origin:0 0;">SALDO X</span>
<span class="kb" style="left:964.15px;top:298px;font-size:11px;line-height:11px;color:#000;font-weight:700;letter-spacing:1.382px;transform:scaleX(0.850);transform-origin:0 0;">PAGAR</span>
<span class="k" style="left:28.00px;top:316px;font-size:11px;line-height:11px;color:#000;letter-spacing:1.500px;transform:scaleX(0.800);transform-origin:0 0;">ADMINISTRACION GENERAL</span>
<span class="k" style="left:239.05px;top:317px;font-size:11px;line-height:11px;color:#000;letter-spacing:0.997px;transform:scaleX(0.950);transform-origin:0 0;">510105.01.01.001.001.01.22.001.001.0001</span>
<span class="k" style="left:496.20px;top:317px;font-size:11px;line-height:11px;color:#000;letter-spacing:1.448px;transform:scaleX(0.800);transform-origin:0 0;">REMUNERACIONES UNIFICADAS</span>
<span style="left:801.00px;top:317px;font-size:11px;line-height:11px;color:#000;transform:scaleX(0.900);transform-origin:0 0;">$</span>
<span class="k" style="left:818.05px;top:317px;font-size:11px;line-height:11px;color:#000;letter-spacing:1.105px;transform:scaleX(0.950);transform-origin:0 0;">57,731.07</span>
<span style="left:887.00px;top:317px;font-size:11px;line-height:11px;color:#000;transform:scaleX(0.900);transform-origin:0 0;">$</span>
<span class="k" style="left:900.05px;top:317px;font-size:11px;line-height:11px;color:#000;letter-spacing:1.105px;transform:scaleX(0.950);transform-origin:0 0;">56,233.56</span>
<span style="left:969.00px;top:317px;font-size:11px;line-height:11px;color:#000;transform:scaleX(0.900);transform-origin:0 0;">$</span>
<span class="k" style="left:989.05px;top:317px;font-size:11px;line-height:11px;color:#000;letter-spacing:1.211px;transform:scaleX(0.950);transform-origin:0 0;">1,497.51</span>
<span style="left:1051.00px;top:316px;font-size:11px;line-height:11px;color:#000;transform:scaleX(0.900);transform-origin:0 0;">$</span>
<span class="k" style="left:1083.00px;top:316px;font-size:11px;line-height:11px;color:#000;letter-spacing:0.925px;transform:scaleX(0.950);transform-origin:0 0;">3,787.98</span>
<span style="left:1144.00px;top:316px;font-size:11px;line-height:11px;color:#000;transform:scaleX(0.900);transform-origin:0 0;">$</span>
<span class="k" style="left:1169.00px;top:316px;font-size:11px;line-height:11px;color:#000;letter-spacing:0.925px;transform:scaleX(0.950);transform-origin:0 0;">4,557.07</span>
<span style="left:1230.00px;top:316px;font-size:11px;line-height:11px;color:#000;transform:scaleX(0.900);transform-origin:0 0;">$</span>
<span class="k" style="left:1249.00px;top:316px;font-size:11px;line-height:11px;color:#000;letter-spacing:0.925px;transform:scaleX(0.950);transform-origin:0 0;">4,557.05</span>
<span style="left:1310.00px;top:316px;font-size:11px;line-height:11px;color:#000;transform:scaleX(0.900);transform-origin:0 0;">$</span>
<span class="k" style="left:1330.00px;top:316px;font-size:11px;line-height:11px;color:#000;letter-spacing:0.925px;transform:scaleX(0.950);transform-origin:0 0;">4,557.05</span>
<span class="k" style="left:28.00px;top:336px;font-size:11px;line-height:11px;color:#000;letter-spacing:1.500px;transform:scaleX(0.800);transform-origin:0 0;">ADMINISTRACION GENERAL</span>
<span class="k" style="left:239.05px;top:337px;font-size:11px;line-height:11px;color:#000;letter-spacing:0.997px;transform:scaleX(0.950);transform-origin:0 0;">510203.01.01.001.002.01.22.001.001.0001</span>
<span class="k" style="left:496.20px;top:337px;font-size:11px;line-height:11px;color:#000;letter-spacing:1.316px;transform:scaleX(0.800);transform-origin:0 0;">DECIMO TERCER SUELDO</span>
<span style="left:801.00px;top:337px;font-size:11px;line-height:11px;color:#000;transform:scaleX(0.900);transform-origin:0 0;">$</span>
<span class="k" style="left:825.05px;top:337px;font-size:11px;line-height:11px;color:#000;letter-spacing:1.068px;transform:scaleX(0.950);transform-origin:0 0;">5,023.00</span>
<span style="left:887.00px;top:337px;font-size:11px;line-height:11px;color:#000;transform:scaleX(0.900);transform-origin:0 0;">$</span>
<span class="k" style="left:908.00px;top:337px;font-size:11px;line-height:11px;color:#000;letter-spacing:0.925px;transform:scaleX(0.950);transform-origin:0 0;">4,717.50</span>
<span style="left:969.00px;top:337px;font-size:11px;line-height:11px;color:#000;transform:scaleX(0.900);transform-origin:0 0;">$</span>
<span class="k" style="left:1000.00px;top:337px;font-size:11px;line-height:11px;color:#000;letter-spacing:1.189px;transform:scaleX(0.950);transform-origin:0 0;">305.50</span>
<span style="left:1051.00px;top:336px;font-size:11px;line-height:11px;color:#000;transform:scaleX(0.900);transform-origin:0 0;">$</span>
<span class="k" style="left:1112.50px;top:336px;font-size:11px;line-height:11px;color:#000;transform:scaleX(0.950);transform-origin:0 0;">-</span>
<span style="left:1144.00px;top:336px;font-size:11px;line-height:11px;color:#000;transform:scaleX(0.900);transform-origin:0 0;">$</span>
<span class="k" style="left:1198.50px;top:336px;font-size:11px;line-height:11px;color:#000;transform:scaleX(0.950);transform-origin:0 0;">-</span>
<span style="left:1230.00px;top:336px;font-size:11px;line-height:11px;color:#000;transform:scaleX(0.900);transform-origin:0 0;">$</span>
<span class="k" style="left:1278.50px;top:336px;font-size:11px;line-height:11px;color:#000;transform:scaleX(0.950);transform-origin:0 0;">-</span>
<span style="left:1310.00px;top:336px;font-size:11px;line-height:11px;color:#000;transform:scaleX(0.900);transform-origin:0 0;">$</span>
<span class="k" style="left:28.00px;top:356px;font-size:11px;line-height:11px;color:#000;letter-spacing:1.500px;transform:scaleX(0.800);transform-origin:0 0;">ADMINISTRACION GENERAL</span>
<span class="k" style="left:239.05px;top:357px;font-size:11px;line-height:11px;color:#000;letter-spacing:0.997px;transform:scaleX(0.950);transform-origin:0 0;">510204.01.01.001.003.01.22.001.001.0001</span>
<span class="k" style="left:496.20px;top:357px;font-size:11px;line-height:11px;color:#000;letter-spacing:1.586px;transform:scaleX(0.800);transform-origin:0 0;">DECIMO CUARTO SUELDO</span>
<span style="left:801.00px;top:357px;font-size:11px;line-height:11px;color:#000;transform:scaleX(0.900);transform-origin:0 0;">$</span>
<span class="k" style="left:826.00px;top:357px;font-size:11px;line-height:11px;color:#000;letter-spacing:0.925px;transform:scaleX(0.950);transform-origin:0 0;">2,550.00</span>
<span style="left:887.00px;top:357px;font-size:11px;line-height:11px;color:#000;transform:scaleX(0.900);transform-origin:0 0;">$</span>
<span class="k" style="left:908.00px;top:357px;font-size:11px;line-height:11px;color:#000;letter-spacing:0.925px;transform:scaleX(0.950);transform-origin:0 0;">2,550.00</span>
<span style="left:969.00px;top:357px;font-size:11px;line-height:11px;color:#000;transform:scaleX(0.900);transform-origin:0 0;">$</span>
<span class="k" style="left:1019.50px;top:357px;font-size:11px;line-height:11px;color:#000;transform:scaleX(0.950);transform-origin:0 0;">-</span>
<span style="left:1051.00px;top:356px;font-size:11px;line-height:11px;color:#000;transform:scaleX(0.900);transform-origin:0 0;">$</span>
<span class="k" style="left:1112.50px;top:356px;font-size:11px;line-height:11px;color:#000;transform:scaleX(0.950);transform-origin:0 0;">-</span>
<span style="left:1144.00px;top:356px;font-size:11px;line-height:11px;color:#000;transform:scaleX(0.900);transform-origin:0 0;">$</span>
<span class="k" style="left:1198.50px;top:356px;font-size:11px;line-height:11px;color:#000;transform:scaleX(0.950);transform-origin:0 0;">-</span>
<span style="left:1230.00px;top:356px;font-size:11px;line-height:11px;color:#000;transform:scaleX(0.900);transform-origin:0 0;">$</span>
<span class="k" style="left:1249.00px;top:356px;font-size:11px;line-height:11px;color:#000;letter-spacing:0.925px;transform:scaleX(0.950);transform-origin:0 0;">2,550.00</span>
<span style="left:1310.00px;top:356px;font-size:11px;line-height:11px;color:#000;transform:scaleX(0.900);transform-origin:0 0;">$</span>
<span class="k" style="left:28.00px;top:376px;font-size:11px;line-height:11px;color:#000;letter-spacing:1.500px;transform:scaleX(0.800);transform-origin:0 0;">ADMINISTRACION GENERAL</span>
<span class="k" style="left:239.05px;top:377px;font-size:11px;line-height:11px;color:#000;letter-spacing:0.997px;transform:scaleX(0.950);transform-origin:0 0;">510601.01.01.001.004.01.22.001.001.0001</span>
<span class="k" style="left:496.00px;top:377px;font-size:11px;line-height:11px;color:#000;letter-spacing:1.411px;transform:scaleX(0.800);transform-origin:0 0;">APORTE PATRONAL</span>
<span style="left:801.00px;top:377px;font-size:11px;line-height:11px;color:#000;transform:scaleX(0.900);transform-origin:0 0;">$</span>
<span class="k" style="left:826.00px;top:377px;font-size:11px;line-height:11px;color:#000;letter-spacing:1.068px;transform:scaleX(0.950);transform-origin:0 0;">8,956.41</span>
<span style="left:887.00px;top:377px;font-size:11px;line-height:11px;color:#000;transform:scaleX(0.900);transform-origin:0 0;">$</span>
<span class="k" style="left:908.00px;top:377px;font-size:11px;line-height:11px;color:#000;letter-spacing:0.925px;transform:scaleX(0.950);transform-origin:0 0;">6,055.38</span>
<span style="left:969.00px;top:377px;font-size:11px;line-height:11px;color:#000;transform:scaleX(0.900);transform-origin:0 0;">$</span>
<span class="k" style="left:990.00px;top:377px;font-size:11px;line-height:11px;color:#000;letter-spacing:0.925px;transform:scaleX(0.950);transform-origin:0 0;">2,901.03</span>
<span style="left:1051.00px;top:376px;font-size:11px;line-height:11px;color:#000;transform:scaleX(0.900);transform-origin:0 0;">$</span>
<span class="k" style="left:1112.50px;top:376px;font-size:11px;line-height:11px;color:#000;transform:scaleX(0.950);transform-origin:0 0;">-</span>
<span style="left:1144.00px;top:376px;font-size:11px;line-height:11px;color:#000;transform:scaleX(0.900);transform-origin:0 0;">$</span>
<span class="k" style="left:1178.05px;top:376px;font-size:11px;line-height:11px;color:#000;letter-spacing:1.389px;transform:scaleX(0.950);transform-origin:0 0;">530.66</span>
<span style="left:1230.00px;top:376px;font-size:11px;line-height:11px;color:#000;transform:scaleX(0.900);transform-origin:0 0;">$</span>
<span class="k" style="left:1258.05px;top:376px;font-size:11px;line-height:11px;color:#000;letter-spacing:1.389px;transform:scaleX(0.950);transform-origin:0 0;">530.66</span>
<span style="left:1310.00px;top:376px;font-size:11px;line-height:11px;color:#000;transform:scaleX(0.900);transform-origin:0 0;">$</span>
<span class="k" style="left:28.00px;top:396px;font-size:11px;line-height:11px;color:#000;letter-spacing:1.500px;transform:scaleX(0.800);transform-origin:0 0;">ADMINISTRACION GENERAL</span>
<span class="k" style="left:239.05px;top:397px;font-size:11px;line-height:11px;color:#000;letter-spacing:0.997px;transform:scaleX(0.950);transform-origin:0 0;">510602.01.01.001.005.01.22.001.001.0001</span>
<span class="k" style="left:496.20px;top:397px;font-size:11px;line-height:11px;color:#000;letter-spacing:1.250px;transform:scaleX(0.800);transform-origin:0 0;">FONDOS DE RESERVA</span>
<span style="left:801.00px;top:397px;font-size:11px;line-height:11px;color:#000;transform:scaleX(0.900);transform-origin:0 0;">$</span>
<span class="k" style="left:826.00px;top:397px;font-size:11px;line-height:11px;color:#000;letter-spacing:0.925px;transform:scaleX(0.950);transform-origin:0 0;">6,581.43</span>
<span style="left:887.00px;top:397px;font-size:11px;line-height:11px;color:#000;transform:scaleX(0.900);transform-origin:0 0;">$</span>
<span class="k" style="left:908.00px;top:397px;font-size:11px;line-height:11px;color:#000;letter-spacing:0.925px;transform:scaleX(0.950);transform-origin:0 0;">4,748.16</span>
<span style="left:969.00px;top:397px;font-size:11px;line-height:11px;color:#000;transform:scaleX(0.900);transform-origin:0 0;">$</span>
<span class="k" style="left:989.05px;top:397px;font-size:11px;line-height:11px;color:#000;letter-spacing:1.068px;transform:scaleX(0.950);transform-origin:0 0;">1,833.27</span>
<span style="left:1051.00px;top:396px;font-size:11px;line-height:11px;color:#000;transform:scaleX(0.900);transform-origin:0 0;">$</span>
<span class="k" style="left:1093.00px;top:396px;font-size:11px;line-height:11px;color:#000;letter-spacing:1.189px;transform:scaleX(0.950);transform-origin:0 0;">330.45</span>
<span style="left:1144.00px;top:396px;font-size:11px;line-height:11px;color:#000;transform:scaleX(0.900);transform-origin:0 0;">$</span>
<span class="k" style="left:1179.00px;top:396px;font-size:11px;line-height:11px;color:#000;letter-spacing:1.189px;transform:scaleX(0.950);transform-origin:0 0;">379.43</span>
<span style="left:1230.00px;top:396px;font-size:11px;line-height:11px;color:#000;transform:scaleX(0.900);transform-origin:0 0;">$</span>
<span class="k" style="left:1259.00px;top:396px;font-size:11px;line-height:11px;color:#000;letter-spacing:1.189px;transform:scaleX(0.950);transform-origin:0 0;">379.43</span>
<span style="left:1310.00px;top:396px;font-size:11px;line-height:11px;color:#000;transform:scaleX(0.900);transform-origin:0 0;">$</span>
<span class="k" style="left:28.00px;top:416px;font-size:11px;line-height:11px;color:#000;letter-spacing:1.500px;transform:scaleX(0.800);transform-origin:0 0;">ADMINISTRACION GENERAL</span>
<span class="k" style="left:239.05px;top:417px;font-size:11px;line-height:11px;color:#000;letter-spacing:0.997px;transform:scaleX(0.950);transform-origin:0 0;">560201.01.01.001.006.01.22.001.001.0001</span>
<span class="k" style="left:496.20px;top:417px;font-size:11px;line-height:11px;color:#000;letter-spacing:1.131px;transform:scaleX(0.800);transform-origin:0 0;">INTERESES PRESTAMO BDE</span>
<span style="left:801.00px;top:417px;font-size:11px;line-height:11px;color:#000;transform:scaleX(0.900);transform-origin:0 0;">$</span>
<span class="k" style="left:825.05px;top:417px;font-size:11px;line-height:11px;color:#000;letter-spacing:1.068px;transform:scaleX(0.950);transform-origin:0 0;">7,920.00</span>
<span style="left:887.00px;top:417px;font-size:11px;line-height:11px;color:#000;transform:scaleX(0.900);transform-origin:0 0;">$</span>
<span class="k" style="left:908.00px;top:417px;font-size:11px;line-height:11px;color:#000;letter-spacing:1.068px;transform:scaleX(0.950);transform-origin:0 0;">6,437.91</span>
<span style="left:969.00px;top:417px;font-size:11px;line-height:11px;color:#000;transform:scaleX(0.900);transform-origin:0 0;">$</span>
<span class="k" style="left:989.05px;top:417px;font-size:11px;line-height:11px;color:#000;letter-spacing:1.068px;transform:scaleX(0.950);transform-origin:0 0;">1,482.09</span>
<span style="left:1051.00px;top:416px;font-size:11px;line-height:11px;color:#000;transform:scaleX(0.900);transform-origin:0 0;">$</span>
<span class="k" style="left:1093.00px;top:416px;font-size:11px;line-height:11px;color:#000;letter-spacing:1.189px;transform:scaleX(0.950);transform-origin:0 0;">478.32</span>
<span style="left:1144.00px;top:416px;font-size:11px;line-height:11px;color:#000;transform:scaleX(0.900);transform-origin:0 0;">$</span>
<span class="k" style="left:1178.05px;top:416px;font-size:11px;line-height:11px;color:#000;letter-spacing:1.389px;transform:scaleX(0.950);transform-origin:0 0;">581.47</span>
<span style="left:1230.00px;top:416px;font-size:11px;line-height:11px;color:#000;transform:scaleX(0.900);transform-origin:0 0;">$</span>
<span class="k" style="left:1258.05px;top:416px;font-size:11px;line-height:11px;color:#000;letter-spacing:1.389px;transform:scaleX(0.950);transform-origin:0 0;">572.30</span>
<span style="left:1310.00px;top:416px;font-size:11px;line-height:11px;color:#000;transform:scaleX(0.900);transform-origin:0 0;">$</span>
<span class="k" style="left:28.00px;top:436px;font-size:11px;line-height:11px;color:#000;letter-spacing:1.500px;transform:scaleX(0.800);transform-origin:0 0;">ADMINISTRACION GENERAL</span>
<span class="k" style="left:239.05px;top:437px;font-size:11px;line-height:11px;color:#000;letter-spacing:0.997px;transform:scaleX(0.950);transform-origin:0 0;">580101.01.01.001.007.01.22.001.001.0001</span>
<span class="k" style="left:496.00px;top:437px;font-size:11px;line-height:11px;color:#000;letter-spacing:1.078px;transform:scaleX(0.800);transform-origin:0 0;">A ENTIDADES DEL PRESUPUESTO GENERAL DEL ESTADO</span>
<span style="left:801.00px;top:437px;font-size:11px;line-height:11px;color:#000;transform:scaleX(0.900);transform-origin:0 0;">$</span>
<span class="k" style="left:836.00px;top:437px;font-size:11px;line-height:11px;color:#000;letter-spacing:1.189px;transform:scaleX(0.950);transform-origin:0 0;">920.00</span>
<span style="left:887.00px;top:437px;font-size:11px;line-height:11px;color:#000;transform:scaleX(0.900);transform-origin:0 0;">$</span>
<span class="k" style="left:918.00px;top:437px;font-size:11px;line-height:11px;color:#000;letter-spacing:1.189px;transform:scaleX(0.950);transform-origin:0 0;">638.02</span>
<span style="left:969.00px;top:437px;font-size:11px;line-height:11px;color:#000;transform:scaleX(0.900);transform-origin:0 0;">$</span>
<span class="k" style="left:1000.00px;top:437px;font-size:11px;line-height:11px;color:#000;letter-spacing:1.189px;transform:scaleX(0.950);transform-origin:0 0;">281.98</span>
<span style="left:1051.00px;top:436px;font-size:11px;line-height:11px;color:#000;transform:scaleX(0.900);transform-origin:0 0;">$</span>
<span class="k" style="left:1099.05px;top:436px;font-size:11px;line-height:11px;color:#000;letter-spacing:1.395px;transform:scaleX(0.950);transform-origin:0 0;">54.46</span>
<span style="left:1144.00px;top:436px;font-size:11px;line-height:11px;color:#000;transform:scaleX(0.900);transform-origin:0 0;">$</span>
<span class="k" style="left:1185.05px;top:436px;font-size:11px;line-height:11px;color:#000;letter-spacing:1.395px;transform:scaleX(0.950);transform-origin:0 0;">54.46</span>
<span style="left:1230.00px;top:436px;font-size:11px;line-height:11px;color:#000;transform:scaleX(0.900);transform-origin:0 0;">$</span>
<span class="k" style="left:1265.05px;top:436px;font-size:11px;line-height:11px;color:#000;letter-spacing:1.395px;transform:scaleX(0.950);transform-origin:0 0;">54.46</span>
<span style="left:1310.00px;top:436px;font-size:11px;line-height:11px;color:#000;transform:scaleX(0.900);transform-origin:0 0;">$</span>
<span class="k" style="left:28.00px;top:456px;font-size:11px;line-height:11px;color:#000;letter-spacing:1.500px;transform:scaleX(0.800);transform-origin:0 0;">ADMINISTRACION GENERAL</span>
<span class="k" style="left:239.05px;top:457px;font-size:11px;line-height:11px;color:#000;letter-spacing:0.997px;transform:scaleX(0.950);transform-origin:0 0;">580104.01.01.001.008.01.22.001.001.0001</span>
<span class="k" style="left:496.00px;top:457px;font-size:11px;line-height:11px;color:#000;letter-spacing:1.241px;transform:scaleX(0.800);transform-origin:0 0;">A GOBIERNOS DESCENTRALIZADOS</span>
<span style="left:801.00px;top:457px;font-size:11px;line-height:11px;color:#000;transform:scaleX(0.900);transform-origin:0 0;">$</span>
<span class="k" style="left:818.05px;top:457px;font-size:11px;line-height:11px;color:#000;letter-spacing:1.105px;transform:scaleX(0.950);transform-origin:0 0;">12,688.90</span>
<span style="left:887.00px;top:457px;font-size:11px;line-height:11px;color:#000;transform:scaleX(0.900);transform-origin:0 0;">$</span>
<span class="k" style="left:900.05px;top:457px;font-size:11px;line-height:11px;color:#000;letter-spacing:1.230px;transform:scaleX(0.950);transform-origin:0 0;">11,151.38</span>
<span style="left:969.00px;top:457px;font-size:11px;line-height:11px;color:#000;transform:scaleX(0.900);transform-origin:0 0;">$</span>
<span class="k" style="left:989.05px;top:457px;font-size:11px;line-height:11px;color:#000;letter-spacing:1.211px;transform:scaleX(0.950);transform-origin:0 0;">1,537.52</span>
<span style="left:1051.00px;top:456px;font-size:11px;line-height:11px;color:#000;transform:scaleX(0.900);transform-origin:0 0;">$</span>
<span class="k" style="left:1112.50px;top:456px;font-size:11px;line-height:11px;color:#000;transform:scaleX(0.950);transform-origin:0 0;">-</span>
<span style="left:1144.00px;top:456px;font-size:11px;line-height:11px;color:#000;transform:scaleX(0.900);transform-origin:0 0;">$</span>
<span class="k" style="left:1178.05px;top:456px;font-size:11px;line-height:11px;color:#000;letter-spacing:1.389px;transform:scaleX(0.950);transform-origin:0 0;">771.19</span>
<span style="left:1230.00px;top:456px;font-size:11px;line-height:11px;color:#000;transform:scaleX(0.900);transform-origin:0 0;">$</span>
<span class="k" style="left:1258.05px;top:456px;font-size:11px;line-height:11px;color:#000;letter-spacing:1.389px;transform:scaleX(0.950);transform-origin:0 0;">771.19</span>
<span style="left:1310.00px;top:456px;font-size:11px;line-height:11px;color:#000;transform:scaleX(0.900);transform-origin:0 0;">$</span>
<span class="k" style="left:28.00px;top:476px;font-size:11px;line-height:11px;color:#000;letter-spacing:0.931px;transform:scaleX(0.800);transform-origin:0 0;">SERVICIOS GENERALES</span>
<span class="k" style="left:239.05px;top:477px;font-size:11px;line-height:11px;color:#000;letter-spacing:0.997px;transform:scaleX(0.950);transform-origin:0 0;">710105.01.01.002.001.01.22.001.001.0001</span>
<span class="k" style="left:496.20px;top:477px;font-size:11px;line-height:11px;color:#000;letter-spacing:1.448px;transform:scaleX(0.800);transform-origin:0 0;">REMUNERACIONES UNIFICADAS</span>
<span style="left:801.00px;top:477px;font-size:11px;line-height:11px;color:#000;transform:scaleX(0.900);transform-origin:0 0;">$</span>
<span class="k" style="left:818.05px;top:477px;font-size:11px;line-height:11px;color:#000;letter-spacing:1.105px;transform:scaleX(0.950);transform-origin:0 0;">19,248.00</span>
<span style="left:887.00px;top:477px;font-size:11px;line-height:11px;color:#000;transform:scaleX(0.900);transform-origin:0 0;">$</span>
<span class="k" style="left:900.05px;top:477px;font-size:11px;line-height:11px;color:#000;letter-spacing:1.105px;transform:scaleX(0.950);transform-origin:0 0;">18,588.75</span>
<span style="left:969.00px;top:477px;font-size:11px;line-height:11px;color:#000;transform:scaleX(0.900);transform-origin:0 0;">$</span>
<span class="k" style="left:1000.00px;top:477px;font-size:11px;line-height:11px;color:#000;letter-spacing:1.189px;transform:scaleX(0.950);transform-origin:0 0;">659.25</span>
<span style="left:1051.00px;top:476px;font-size:11px;line-height:11px;color:#000;transform:scaleX(0.900);transform-origin:0 0;">$</span>
<span class="k" style="left:1093.00px;top:476px;font-size:11px;line-height:11px;color:#000;letter-spacing:1.189px;transform:scaleX(0.950);transform-origin:0 0;">925.35</span>
<span style="left:1144.00px;top:476px;font-size:11px;line-height:11px;color:#000;transform:scaleX(0.900);transform-origin:0 0;">$</span>
<span class="k" style="left:1168.05px;top:476px;font-size:11px;line-height:11px;color:#000;letter-spacing:1.068px;transform:scaleX(0.950);transform-origin:0 0;">1,576.30</span>
<span style="left:1230.00px;top:476px;font-size:11px;line-height:11px;color:#000;transform:scaleX(0.900);transform-origin:0 0;">$</span>
<span class="k" style="left:1248.05px;top:476px;font-size:11px;line-height:11px;color:#000;letter-spacing:1.068px;transform:scaleX(0.950);transform-origin:0 0;">1,645.00</span>
<span style="left:1310.00px;top:476px;font-size:11px;line-height:11px;color:#000;transform:scaleX(0.900);transform-origin:0 0;">$</span>
<span class="k" style="left:1329.05px;top:476px;font-size:11px;line-height:11px;color:#000;letter-spacing:1.068px;transform:scaleX(0.950);transform-origin:0 0;">1,645.00</span>
<span class="k" style="left:28.00px;top:496px;font-size:11px;line-height:11px;color:#000;letter-spacing:0.931px;transform:scaleX(0.800);transform-origin:0 0;">SERVICIOS GENERALES</span>
<span class="k" style="left:239.05px;top:497px;font-size:11px;line-height:11px;color:#000;letter-spacing:0.997px;transform:scaleX(0.950);transform-origin:0 0;">710203.01.01.002.002.01.22.001.001.0001</span>
<span class="k" style="left:496.20px;top:497px;font-size:11px;line-height:11px;color:#000;letter-spacing:1.316px;transform:scaleX(0.800);transform-origin:0 0;">DECIMO TERCER SUELDO</span>
<span style="left:801.00px;top:497px;font-size:11px;line-height:11px;color:#000;transform:scaleX(0.900);transform-origin:0 0;">$</span>
<span class="k" style="left:825.05px;top:497px;font-size:11px;line-height:11px;color:#000;letter-spacing:1.068px;transform:scaleX(0.950);transform-origin:0 0;">1,635.00</span>
<span style="left:887.00px;top:497px;font-size:11px;line-height:11px;color:#000;transform:scaleX(0.900);transform-origin:0 0;">$</span>
<span class="k" style="left:907.05px;top:497px;font-size:11px;line-height:11px;color:#000;letter-spacing:1.068px;transform:scaleX(0.950);transform-origin:0 0;">1,379.93</span>
<span style="left:969.00px;top:497px;font-size:11px;line-height:11px;color:#000;transform:scaleX(0.900);transform-origin:0 0;">$</span>
<span class="k" style="left:1000.00px;top:497px;font-size:11px;line-height:11px;color:#000;letter-spacing:1.189px;transform:scaleX(0.950);transform-origin:0 0;">255.07</span>
<span style="left:1051.00px;top:496px;font-size:11px;line-height:11px;color:#000;transform:scaleX(0.900);transform-origin:0 0;">$</span>
<span class="k" style="left:1112.50px;top:496px;font-size:11px;line-height:11px;color:#000;transform:scaleX(0.950);transform-origin:0 0;">-</span>
<span style="left:1144.00px;top:496px;font-size:11px;line-height:11px;color:#000;transform:scaleX(0.900);transform-origin:0 0;">$</span>
<span class="k" style="left:1198.50px;top:496px;font-size:11px;line-height:11px;color:#000;transform:scaleX(0.950);transform-origin:0 0;">-</span>
<span style="left:1230.00px;top:496px;font-size:11px;line-height:11px;color:#000;transform:scaleX(0.900);transform-origin:0 0;">$</span>
<span class="k" style="left:1278.50px;top:496px;font-size:11px;line-height:11px;color:#000;transform:scaleX(0.950);transform-origin:0 0;">-</span>
<span style="left:1310.00px;top:496px;font-size:11px;line-height:11px;color:#000;transform:scaleX(0.900);transform-origin:0 0;">$</span>
<span class="k" style="left:28.00px;top:516px;font-size:11px;line-height:11px;color:#000;letter-spacing:0.931px;transform:scaleX(0.800);transform-origin:0 0;">SERVICIOS GENERALES</span>
<span class="k" style="left:239.05px;top:517px;font-size:11px;line-height:11px;color:#000;letter-spacing:0.997px;transform:scaleX(0.950);transform-origin:0 0;">710204.01.01.002.003.01.22.001.001.0006</span>
<span class="k" style="left:496.20px;top:517px;font-size:11px;line-height:11px;color:#000;letter-spacing:1.586px;transform:scaleX(0.800);transform-origin:0 0;">DECIMO CUARTO SUELDO</span>
<span style="left:801.00px;top:517px;font-size:11px;line-height:11px;color:#000;transform:scaleX(0.900);transform-origin:0 0;">$</span>
<span class="k" style="left:825.05px;top:517px;font-size:11px;line-height:11px;color:#000;letter-spacing:1.068px;transform:scaleX(0.950);transform-origin:0 0;">1,275.00</span>
<span style="left:887.00px;top:517px;font-size:11px;line-height:11px;color:#000;transform:scaleX(0.900);transform-origin:0 0;">$</span>
<span class="k" style="left:917.05px;top:517px;font-size:11px;line-height:11px;color:#000;letter-spacing:1.389px;transform:scaleX(0.950);transform-origin:0 0;">539.45</span>
<span style="left:969.00px;top:517px;font-size:11px;line-height:11px;color:#000;transform:scaleX(0.900);transform-origin:0 0;">$</span>
<span class="k" style="left:999.05px;top:517px;font-size:11px;line-height:11px;color:#000;letter-spacing:1.389px;transform:scaleX(0.950);transform-origin:0 0;">735.55</span>
<span style="left:1051.00px;top:516px;font-size:11px;line-height:11px;color:#000;transform:scaleX(0.900);transform-origin:0 0;">$</span>
<span class="k" style="left:1112.50px;top:516px;font-size:11px;line-height:11px;color:#000;transform:scaleX(0.950);transform-origin:0 0;">-</span>
<span style="left:1144.00px;top:516px;font-size:11px;line-height:11px;color:#000;transform:scaleX(0.900);transform-origin:0 0;">$</span>
<span class="k" style="left:1198.50px;top:516px;font-size:11px;line-height:11px;color:#000;transform:scaleX(0.950);transform-origin:0 0;">-</span>
<span style="left:1230.00px;top:516px;font-size:11px;line-height:11px;color:#000;transform:scaleX(0.900);transform-origin:0 0;">$</span>
<span class="k" style="left:1258.05px;top:516px;font-size:11px;line-height:11px;color:#000;letter-spacing:1.389px;transform:scaleX(0.950);transform-origin:0 0;">177.08</span>
<span style="left:1310.00px;top:516px;font-size:11px;line-height:11px;color:#000;transform:scaleX(0.900);transform-origin:0 0;">$</span>
<span class="k" style="left:28.00px;top:536px;font-size:11px;line-height:11px;color:#000;letter-spacing:0.931px;transform:scaleX(0.800);transform-origin:0 0;">SERVICIOS GENERALES</span>
<span class="k" style="left:239.05px;top:537px;font-size:11px;line-height:11px;color:#000;letter-spacing:0.997px;transform:scaleX(0.950);transform-origin:0 0;">710601.01.01.002.004.01.22.001.001.0006</span>
<span class="k" style="left:496.00px;top:537px;font-size:11px;line-height:11px;color:#000;letter-spacing:1.411px;transform:scaleX(0.800);transform-origin:0 0;">APORTE PATRONAL</span>
<span style="left:801.00px;top:537px;font-size:11px;line-height:11px;color:#000;transform:scaleX(0.900);transform-origin:0 0;">$</span>
<span class="k" style="left:826.00px;top:537px;font-size:11px;line-height:11px;color:#000;letter-spacing:0.925px;transform:scaleX(0.950);transform-origin:0 0;">2,383.83</span>
<span style="left:887.00px;top:537px;font-size:11px;line-height:11px;color:#000;transform:scaleX(0.900);transform-origin:0 0;">$</span>
<span class="k" style="left:907.05px;top:537px;font-size:11px;line-height:11px;color:#000;letter-spacing:1.068px;transform:scaleX(0.950);transform-origin:0 0;">1,998.64</span>
<span style="left:969.00px;top:537px;font-size:11px;line-height:11px;color:#000;transform:scaleX(0.900);transform-origin:0 0;">$</span>
<span class="k" style="left:1000.00px;top:537px;font-size:11px;line-height:11px;color:#000;letter-spacing:1.189px;transform:scaleX(0.950);transform-origin:0 0;">385.19</span>
<span style="left:1051.00px;top:536px;font-size:11px;line-height:11px;color:#000;transform:scaleX(0.900);transform-origin:0 0;">$</span>
<span class="k" style="left:1112.50px;top:536px;font-size:11px;line-height:11px;color:#000;transform:scaleX(0.950);transform-origin:0 0;">-</span>
<span style="left:1144.00px;top:536px;font-size:11px;line-height:11px;color:#000;transform:scaleX(0.900);transform-origin:0 0;">$</span>
<span class="k" style="left:1178.05px;top:536px;font-size:11px;line-height:11px;color:#000;letter-spacing:1.389px;transform:scaleX(0.950);transform-origin:0 0;">121.75</span>
<span style="left:1230.00px;top:536px;font-size:11px;line-height:11px;color:#000;transform:scaleX(0.900);transform-origin:0 0;">$</span>
<span class="k" style="left:1258.05px;top:536px;font-size:11px;line-height:11px;color:#000;letter-spacing:1.389px;transform:scaleX(0.950);transform-origin:0 0;">191.65</span>
<span style="left:1310.00px;top:536px;font-size:11px;line-height:11px;color:#000;transform:scaleX(0.900);transform-origin:0 0;">$</span>
<span class="k" style="left:28.00px;top:556px;font-size:11px;line-height:11px;color:#000;letter-spacing:0.931px;transform:scaleX(0.800);transform-origin:0 0;">SERVICIOS GENERALES</span>
<span class="k" style="left:239.05px;top:557px;font-size:11px;line-height:11px;color:#000;letter-spacing:0.997px;transform:scaleX(0.950);transform-origin:0 0;">710602.01.01.002.006.01.22.001.001.0006</span>
<span class="k" style="left:496.20px;top:557px;font-size:11px;line-height:11px;color:#000;letter-spacing:1.327px;transform:scaleX(0.800);transform-origin:0 0;">FONDOS RESERVA</span>
<span style="left:801.00px;top:557px;font-size:11px;line-height:11px;color:#000;transform:scaleX(0.900);transform-origin:0 0;">$</span>
<span class="k" style="left:836.00px;top:557px;font-size:11px;line-height:11px;color:#000;letter-spacing:1.189px;transform:scaleX(0.950);transform-origin:0 0;">620.00</span>
<span style="left:887.00px;top:557px;font-size:11px;line-height:11px;color:#000;transform:scaleX(0.900);transform-origin:0 0;">$</span>
<span class="k" style="left:917.05px;top:557px;font-size:11px;line-height:11px;color:#000;letter-spacing:1.389px;transform:scaleX(0.950);transform-origin:0 0;">516.50</span>
<span style="left:969.00px;top:557px;font-size:11px;line-height:11px;color:#000;transform:scaleX(0.900);transform-origin:0 0;">$</span>
<span class="k" style="left:999.05px;top:557px;font-size:11px;line-height:11px;color:#000;letter-spacing:1.389px;transform:scaleX(0.950);transform-origin:0 0;">103.50</span>
<span style="left:1051.00px;top:556px;font-size:11px;line-height:11px;color:#000;transform:scaleX(0.900);transform-origin:0 0;">$</span>
<span class="k" style="left:1099.05px;top:556px;font-size:11px;line-height:11px;color:#000;letter-spacing:1.395px;transform:scaleX(0.950);transform-origin:0 0;">51.65</span>
<span style="left:1144.00px;top:556px;font-size:11px;line-height:11px;color:#000;transform:scaleX(0.900);transform-origin:0 0;">$</span>
<span class="k" style="left:1185.05px;top:556px;font-size:11px;line-height:11px;color:#000;letter-spacing:1.395px;transform:scaleX(0.950);transform-origin:0 0;">51.65</span>
<span style="left:1230.00px;top:556px;font-size:11px;line-height:11px;color:#000;transform:scaleX(0.900);transform-origin:0 0;">$</span>
<span class="k" style="left:1265.05px;top:556px;font-size:11px;line-height:11px;color:#000;letter-spacing:1.395px;transform:scaleX(0.950);transform-origin:0 0;">51.65</span>
<span style="left:1310.00px;top:556px;font-size:11px;line-height:11px;color:#000;transform:scaleX(0.900);transform-origin:0 0;">$</span>
<span class="k" style="left:28.00px;top:576px;font-size:11px;line-height:11px;color:#000;letter-spacing:0.931px;transform:scaleX(0.800);transform-origin:0 0;">SERVICIOS GENERALES</span>
<span class="k" style="left:239.05px;top:577px;font-size:11px;line-height:11px;color:#000;letter-spacing:0.997px;transform:scaleX(0.950);transform-origin:0 0;">710707.01.01.002.026.01.22.001.001.0000</span>
<span class="k" style="left:497.00px;top:577px;font-size:11px;line-height:11px;color:#000;letter-spacing:1.481px;transform:scaleX(0.800);transform-origin:0 0;">VACACIONES NO GOZADAS</span>
<span style="left:801.00px;top:577px;font-size:11px;line-height:11px;color:#000;transform:scaleX(0.900);transform-origin:0 0;">$</span>
<span class="k" style="left:826.00px;top:577px;font-size:11px;line-height:11px;color:#000;letter-spacing:0.925px;transform:scaleX(0.950);transform-origin:0 0;">2,000.00</span>
<span style="left:887.00px;top:577px;font-size:11px;line-height:11px;color:#000;transform:scaleX(0.900);transform-origin:0 0;">$</span>
<span class="k" style="left:918.00px;top:577px;font-size:11px;line-height:11px;color:#000;letter-spacing:1.189px;transform:scaleX(0.950);transform-origin:0 0;">484.80</span>
<span style="left:969.00px;top:577px;font-size:11px;line-height:11px;color:#000;transform:scaleX(0.900);transform-origin:0 0;">$</span>
<span class="k" style="left:989.05px;top:577px;font-size:11px;line-height:11px;color:#000;letter-spacing:1.068px;transform:scaleX(0.950);transform-origin:0 0;">1,515.20</span>
<span style="left:1051.00px;top:576px;font-size:11px;line-height:11px;color:#000;transform:scaleX(0.900);transform-origin:0 0;">$</span>
<span class="k" style="left:1112.50px;top:576px;font-size:11px;line-height:11px;color:#000;transform:scaleX(0.950);transform-origin:0 0;">-</span>
<span style="left:1144.00px;top:576px;font-size:11px;line-height:11px;color:#000;transform:scaleX(0.900);transform-origin:0 0;">$</span>
<span class="k" style="left:1198.50px;top:576px;font-size:11px;line-height:11px;color:#000;transform:scaleX(0.950);transform-origin:0 0;">-</span>
<span style="left:1230.00px;top:576px;font-size:11px;line-height:11px;color:#000;transform:scaleX(0.900);transform-origin:0 0;">$</span>
<span class="k" style="left:1278.50px;top:576px;font-size:11px;line-height:11px;color:#000;transform:scaleX(0.950);transform-origin:0 0;">-</span>
<span style="left:1310.00px;top:576px;font-size:11px;line-height:11px;color:#000;transform:scaleX(0.900);transform-origin:0 0;">$</span>
<span class="k" style="left:28.00px;top:596px;font-size:11px;line-height:11px;color:#000;letter-spacing:0.931px;transform:scaleX(0.800);transform-origin:0 0;">SERVICIOS GENERALES</span>
<span class="k" style="left:239.05px;top:597px;font-size:11px;line-height:11px;color:#000;letter-spacing:0.997px;transform:scaleX(0.950);transform-origin:0 0;">730104.01.01.002.008.01.22.001.001.0006</span>
<span class="k" style="left:496.20px;top:597px;font-size:11px;line-height:11px;color:#000;letter-spacing:1.062px;transform:scaleX(0.800);transform-origin:0 0;">ENERGÍA ELÉCTRICA</span>
<span style="left:801.00px;top:597px;font-size:11px;line-height:11px;color:#000;transform:scaleX(0.900);transform-origin:0 0;">$</span>
<span class="k" style="left:826.00px;top:597px;font-size:11px;line-height:11px;color:#000;letter-spacing:0.925px;transform:scaleX(0.950);transform-origin:0 0;">2,974.00</span>
<span style="left:887.00px;top:597px;font-size:11px;line-height:11px;color:#000;transform:scaleX(0.900);transform-origin:0 0;">$</span>
<span class="k" style="left:907.05px;top:597px;font-size:11px;line-height:11px;color:#000;letter-spacing:1.211px;transform:scaleX(0.950);transform-origin:0 0;">1,962.22</span>
<span style="left:969.00px;top:597px;font-size:11px;line-height:11px;color:#000;transform:scaleX(0.900);transform-origin:0 0;">$</span>
<span class="k" style="left:989.05px;top:597px;font-size:11px;line-height:11px;color:#000;letter-spacing:1.211px;transform:scaleX(0.950);transform-origin:0 0;">1,011.78</span>
<span style="left:1051.00px;top:596px;font-size:11px;line-height:11px;color:#000;transform:scaleX(0.900);transform-origin:0 0;">$</span>
<span class="k" style="left:1092.05px;top:596px;font-size:11px;line-height:11px;color:#000;letter-spacing:1.389px;transform:scaleX(0.950);transform-origin:0 0;">165.00</span>
<span style="left:1144.00px;top:596px;font-size:11px;line-height:11px;color:#000;transform:scaleX(0.900);transform-origin:0 0;">$</span>
<span class="k" style="left:1178.05px;top:596px;font-size:11px;line-height:11px;color:#000;letter-spacing:1.389px;transform:scaleX(0.950);transform-origin:0 0;">165.91</span>
<span style="left:1230.00px;top:596px;font-size:11px;line-height:11px;color:#000;transform:scaleX(0.900);transform-origin:0 0;">$</span>
<span class="k" style="left:1258.05px;top:596px;font-size:11px;line-height:11px;color:#000;letter-spacing:1.389px;transform:scaleX(0.950);transform-origin:0 0;">105.00</span>
<span style="left:1310.00px;top:596px;font-size:11px;line-height:11px;color:#000;transform:scaleX(0.900);transform-origin:0 0;">$</span>
<span class="k" style="left:28.00px;top:616px;font-size:11px;line-height:11px;color:#000;letter-spacing:0.931px;transform:scaleX(0.800);transform-origin:0 0;">SERVICIOS GENERALES</span>
<span class="k" style="left:239.05px;top:617px;font-size:11px;line-height:11px;color:#000;letter-spacing:0.997px;transform:scaleX(0.950);transform-origin:0 0;">730105.01.01.002.007.01.22.001.001.0006</span>
<span class="k" style="left:497.00px;top:617px;font-size:11px;line-height:11px;color:#000;letter-spacing:1.419px;transform:scaleX(0.800);transform-origin:0 0;">TELECOMUNICACIONES</span>
<span style="left:801.00px;top:617px;font-size:11px;line-height:11px;color:#000;transform:scaleX(0.900);transform-origin:0 0;">$</span>
<span class="k" style="left:826.00px;top:617px;font-size:11px;line-height:11px;color:#000;letter-spacing:0.925px;transform:scaleX(0.950);transform-origin:0 0;">2,410.00</span>
<span style="left:887.00px;top:617px;font-size:11px;line-height:11px;color:#000;transform:scaleX(0.900);transform-origin:0 0;">$</span>
<span class="k" style="left:908.00px;top:617px;font-size:11px;line-height:11px;color:#000;letter-spacing:1.068px;transform:scaleX(0.950);transform-origin:0 0;">2,088.92</span>
<span style="left:969.00px;top:617px;font-size:11px;line-height:11px;color:#000;transform:scaleX(0.900);transform-origin:0 0;">$</span>
<span class="k" style="left:1000.00px;top:617px;font-size:11px;line-height:11px;color:#000;letter-spacing:1.189px;transform:scaleX(0.950);transform-origin:0 0;">321.08</span>
<span style="left:1051.00px;top:616px;font-size:11px;line-height:11px;color:#000;transform:scaleX(0.900);transform-origin:0 0;">$</span>
<span class="k" style="left:1092.05px;top:616px;font-size:11px;line-height:11px;color:#000;letter-spacing:1.389px;transform:scaleX(0.950);transform-origin:0 0;">172.10</span>
<span style="left:1144.00px;top:616px;font-size:11px;line-height:11px;color:#000;transform:scaleX(0.900);transform-origin:0 0;">$</span>
<span class="k" style="left:1178.05px;top:616px;font-size:11px;line-height:11px;color:#000;letter-spacing:1.389px;transform:scaleX(0.950);transform-origin:0 0;">173.86</span>
<span style="left:1230.00px;top:616px;font-size:11px;line-height:11px;color:#000;transform:scaleX(0.900);transform-origin:0 0;">$</span>
<span class="k" style="left:1258.05px;top:616px;font-size:11px;line-height:11px;color:#000;letter-spacing:1.389px;transform:scaleX(0.950);transform-origin:0 0;">170.18</span>
<span style="left:1310.00px;top:616px;font-size:11px;line-height:11px;color:#000;transform:scaleX(0.900);transform-origin:0 0;">$</span>
<span class="k" style="left:28.00px;top:636px;font-size:11px;line-height:11px;color:#000;letter-spacing:0.931px;transform:scaleX(0.800);transform-origin:0 0;">SERVICIOS GENERALES</span>
<span class="k" style="left:239.05px;top:637px;font-size:11px;line-height:11px;color:#000;letter-spacing:0.997px;transform:scaleX(0.950);transform-origin:0 0;">730402.01.01.002.023.01.22.001.001.0006</span>
<span class="k" style="left:496.20px;top:637px;font-size:11px;line-height:11px;color:#000;letter-spacing:1.083px;transform:scaleX(0.800);transform-origin:0 0;">EDIFICIOS,LOCALES Y RESIDENCIAS</span>
<span style="left:801.00px;top:637px;font-size:11px;line-height:11px;color:#000;transform:scaleX(0.900);transform-origin:0 0;">$</span>
<span class="k" style="left:826.00px;top:637px;font-size:11px;line-height:11px;color:#000;letter-spacing:0.925px;transform:scaleX(0.950);transform-origin:0 0;">3,000.00</span>
<span style="left:887.00px;top:637px;font-size:11px;line-height:11px;color:#000;transform:scaleX(0.900);transform-origin:0 0;">$</span>
<span class="k" style="left:907.05px;top:637px;font-size:11px;line-height:11px;color:#000;letter-spacing:1.068px;transform:scaleX(0.950);transform-origin:0 0;">1,500.00</span>
<span style="left:969.00px;top:637px;font-size:11px;line-height:11px;color:#000;transform:scaleX(0.900);transform-origin:0 0;">$</span>
<span class="k" style="left:989.05px;top:637px;font-size:11px;line-height:11px;color:#000;letter-spacing:1.068px;transform:scaleX(0.950);transform-origin:0 0;">1,500.00</span>
<span style="left:1051.00px;top:636px;font-size:11px;line-height:11px;color:#000;transform:scaleX(0.900);transform-origin:0 0;">$</span>
<span class="k" style="left:1112.50px;top:636px;font-size:11px;line-height:11px;color:#000;transform:scaleX(0.950);transform-origin:0 0;">-</span>
<span style="left:1144.00px;top:636px;font-size:11px;line-height:11px;color:#000;transform:scaleX(0.900);transform-origin:0 0;">$</span>
<span class="k" style="left:1198.50px;top:636px;font-size:11px;line-height:11px;color:#000;transform:scaleX(0.950);transform-origin:0 0;">-</span>
<span style="left:1230.00px;top:636px;font-size:11px;line-height:11px;color:#000;transform:scaleX(0.900);transform-origin:0 0;">$</span>
<span class="k" style="left:1278.50px;top:636px;font-size:11px;line-height:11px;color:#000;transform:scaleX(0.950);transform-origin:0 0;">-</span>
<span style="left:1310.00px;top:636px;font-size:11px;line-height:11px;color:#000;transform:scaleX(0.900);transform-origin:0 0;">$</span>
<span class="k" style="left:28.00px;top:656px;font-size:11px;line-height:11px;color:#000;letter-spacing:0.931px;transform:scaleX(0.800);transform-origin:0 0;">SERVICIOS GENERALES</span>
<span class="k" style="left:239.05px;top:657px;font-size:11px;line-height:11px;color:#000;letter-spacing:0.997px;transform:scaleX(0.950);transform-origin:0 0;">730403.01.01.002.009.01.22.001.001.0006</span>
<span class="k" style="left:496.20px;top:657px;font-size:11px;line-height:11px;color:#000;letter-spacing:1.962px;transform:scaleX(0.800);transform-origin:0 0;">MOBILIARIOS</span>
<span style="left:801.00px;top:657px;font-size:11px;line-height:11px;color:#000;transform:scaleX(0.900);transform-origin:0 0;">$</span>
<span class="k" style="left:825.05px;top:657px;font-size:11px;line-height:11px;color:#000;letter-spacing:1.068px;transform:scaleX(0.950);transform-origin:0 0;">1,000.00</span>
<span style="left:887.00px;top:657px;font-size:11px;line-height:11px;color:#000;transform:scaleX(0.900);transform-origin:0 0;">$</span>
<span class="k" style="left:925.00px;top:657px;font-size:11px;line-height:11px;color:#000;letter-spacing:1.145px;transform:scaleX(0.950);transform-origin:0 0;">93.75</span>
<span style="left:969.00px;top:657px;font-size:11px;line-height:11px;color:#000;transform:scaleX(0.900);transform-origin:0 0;">$</span>
<span class="k" style="left:1000.00px;top:657px;font-size:11px;line-height:11px;color:#000;letter-spacing:1.189px;transform:scaleX(0.950);transform-origin:0 0;">906.25</span>
<span style="left:1051.00px;top:656px;font-size:11px;line-height:11px;color:#000;transform:scaleX(0.900);transform-origin:0 0;">$</span>
<span class="k" style="left:1112.50px;top:656px;font-size:11px;line-height:11px;color:#000;transform:scaleX(0.950);transform-origin:0 0;">-</span>
<span style="left:1144.00px;top:656px;font-size:11px;line-height:11px;color:#000;transform:scaleX(0.900);transform-origin:0 0;">$</span>
<span class="k" style="left:1198.50px;top:656px;font-size:11px;line-height:11px;color:#000;transform:scaleX(0.950);transform-origin:0 0;">-</span>
<span style="left:1230.00px;top:656px;font-size:11px;line-height:11px;color:#000;transform:scaleX(0.900);transform-origin:0 0;">$</span>
<span class="k" style="left:1278.50px;top:656px;font-size:11px;line-height:11px;color:#000;transform:scaleX(0.950);transform-origin:0 0;">-</span>
<span style="left:1310.00px;top:656px;font-size:11px;line-height:11px;color:#000;transform:scaleX(0.900);transform-origin:0 0;">$</span>
<span style="left:495.20px;top:674px;font-size:11px;line-height:11px;color:#000;letter-spacing:1.765px;transform:scaleX(0.800);transform-origin:0 0;">MAQUINARIA Y EQUIPOS (MANTENIMIENTO</span>
<div style="left:1338px;top:237px;width:22px;height:441px;background:#e6e6e6"></div>
<div style="left:1338px;top:256px;width:1px;height:422px;background:#a3a3a3"></div>
<div style="left:1342px;top:239px;width:15px;height:15px;background:#fff;border:1px solid #a6a6a6"></div>
<svg style="left:1345px;top:244px;" width="9" height="5" viewBox="0 0 9 5"><path d="M0 5h9L4.5 0z" fill="#222"/></svg>
<div style="left:1342px;top:254px;width:15px;height:409px;background:#f0f0f0"></div>
<div style="left:1342px;top:254px;width:15px;height:62px;background:#fff;border:1px solid #a6a6a6"></div>
<div style="left:1342px;top:663px;width:15px;height:15px;background:#fff;border:1px solid #a6a6a6"></div>
<svg style="left:1345px;top:668px;" width="9" height="5" viewBox="0 0 9 5"><path d="M0 0h9L4.5 5z" fill="#222"/></svg>
<div style="left:0px;top:678px;width:1360px;height:28px;background:#e6e6e6"></div>
<div style="left:0px;top:678px;width:1340px;height:1px;background:#c6c6c6"></div>
<svg style="left:26px;top:687px;" width="5" height="9" viewBox="0 0 5 9"><path d="M5 0v9L0 4.5z" fill="#bdbdbd"/></svg>
<svg style="left:55px;top:687px;" width="5" height="9" viewBox="0 0 5 9"><path d="M0 0v9l5-4.5z" fill="#bdbdbd"/></svg>
<div style="left:100px;top:678px;width:61px;height:26px;background:#fff;border-left:1px solid #c6c6c6;border-right:1px solid #c6c6c6"></div>
<div style="left:100px;top:701px;width:61px;height:2px;background:#217346"></div>
<span style="left:112.00px;top:686px;font-size:12px;line-height:12px;color:#217346;font-weight:700;letter-spacing:0.500px;">Hoja1</span>
<span style="left:172.00px;top:686px;font-size:12px;line-height:12px;color:#444;letter-spacing:0.750px;">Hoja2</span>
<div style="left:219px;top:682px;width:1px;height:20px;background:#c6c6c6"></div>
<svg style="left:251px;top:682px;" width="20" height="20" viewBox="0 0 20 20"><circle cx="10" cy="10" r="7.5" fill="none" stroke="#777" stroke-width="1.3"/><path d="M10 6v8M6 10h8" stroke="#666" stroke-width="1.8"/></svg>
<div style="left:816px;top:686px;width:1px;height:2px;background:#a0a0a0"></div>
<div style="left:816px;top:690px;width:1px;height:2px;background:#a0a0a0"></div>
<div style="left:816px;top:694px;width:1px;height:2px;background:#a0a0a0"></div>
<div style="left:833px;top:685px;width:505px;height:16px;background:#f0f0f0"></div>
<div style="left:833px;top:685px;width:15px;height:15px;background:#fff;border:1px solid #b5b5b5"></div>
<svg style="left:837px;top:689px;" width="5" height="8" viewBox="0 0 5 8"><path d="M5 0v8L0 4z" fill="#222"/></svg>
<div style="left:848px;top:685px;width:189px;height:15px;background:#e9f1ec;border:1px solid #7fb28f"></div>
<div style="left:1322px;top:685px;width:15px;height:15px;background:#fff;border:1px solid #b5b5b5"></div>
<svg style="left:1327px;top:689px;" width="5" height="8" viewBox="0 0 5 8"><path d="M0 0v8l5-4z" fill="#222"/></svg>
<div style="left:0px;top:706px;width:1360px;height:22px;background:#f3f3f3;border-top:1px solid #d5d5d5"></div>
<span style="left:7.00px;top:712px;font-size:11px;line-height:11px;color:#333;letter-spacing:0.250px;">Listo</span>
<svg style="left:49px;top:708px;" width="20" height="18" viewBox="0 0 20 18"><path d="M6.5 2.5A5.8 5.8 0 1 0 7 14.2" fill="none" stroke="#444" stroke-width="1.2" stroke-dasharray="2.2 1.3"/><path d="M8.5 1v7M6 5.8l2.5 2.5L11 5.8" fill="none" stroke="#444" stroke-width="1.1"/><path d="M10.5 7.5h3.5M12.5 5.8l2 1.7l-2 1.7" fill="none" stroke="#444" stroke-width="1.1"/><path d="M10 9.5l7 7M17 9.5l-7 7" stroke="#444" stroke-width="1.8"/></svg>
<span style="left:69.00px;top:712px;font-size:11px;line-height:11px;color:#333;letter-spacing:0.162px;">Accesibilidad: es necesario investigar</span>
<div style="left:1060px;top:706px;width:40px;height:22px;background:#c8c8c8"></div>
<svg style="left:1073px;top:710px;" width="14" height="14" viewBox="0 0 14 14"><rect x="0" y="0" width="4" height="4" fill="#707070"/><rect x="0" y="5" width="4" height="4" fill="#707070"/><rect x="0" y="10" width="4" height="4" fill="#707070"/><rect x="5" y="0" width="4" height="4" fill="#707070"/><rect x="5" y="5" width="4" height="4" fill="#707070"/><rect x="5" y="10" width="4" height="4" fill="#707070"/><rect x="10" y="0" width="4" height="4" fill="#707070"/><rect x="10" y="5" width="4" height="4" fill="#707070"/><rect x="10" y="10" width="4" height="4" fill="#707070"/></svg>
<svg style="left:1113px;top:710px;" width="14" height="14" viewBox="0 0 14 14"><rect x="0.5" y="0.5" width="13" height="13" fill="none" stroke="#777"/><rect x="3.5" y="3.5" width="7" height="7" fill="none" stroke="#777"/><path d="M5 5.5h4M5 7.5h4" stroke="#777"/></svg>
<svg style="left:1153px;top:710px;" width="14" height="14" viewBox="0 0 14 14"><rect x="0.5" y="0.5" width="13" height="13" fill="none" stroke="#777"/><path d="M4.5 0.5v6h5v-6M9.5 6.5v7" fill="none" stroke="#777"/></svg>
<div style="left:1186px;top:717px;width:8px;height:1px;background:#555"></div>
<div style="left:1199px;top:717px;width:100px;height:1px;background:#777"></div>
<div style="left:1247px;top:712px;width:5px;height:11px;background:#555"></div>
<div style="left:1304px;top:717px;width:8px;height:1px;background:#555"></div>
<div style="left:1307px;top:713px;width:1px;height:9px;background:#555"></div>
<span style="left:1324.00px;top:712px;font-size:11px;line-height:11px;color:#333;">100%</span>
<div style="left:0px;top:728px;width:1360px;height:40px;background:#101010"></div>
<svg style="left:15px;top:739px;" width="18" height="18" viewBox="0 0 18 18"><path d="M0 2.6l6.8-0.95v6.65H0zM8.2 1.45L17.5 0.1v8.2H8.2zM0 9.7h6.8v6.65L0 15.4zM8.2 9.7h9.3v8.2L8.2 16.55z" fill="#fff"/></svg>
<svg style="left:63px;top:739px;" width="18" height="18" viewBox="0 0 18 18"><circle cx="11" cy="6.5" r="5.5" fill="none" stroke="#fff" stroke-width="1.3"/><path d="M7 10.5L1 16.5" stroke="#fff" stroke-width="1.5"/></svg>
<svg style="left:110px;top:735px;" width="26" height="26" viewBox="0 0 26 26"><defs><linearGradient id="eg" x1="0" y1="0.2" x2="1" y2="0.6"><stop offset="0" stop-color="#35bff2"/><stop offset="0.55" stop-color="#2fc6b8"/><stop offset="1" stop-color="#6ee85a"/></linearGradient></defs><circle cx="13" cy="13" r="12.2" fill="url(#eg)"/><path d="M0.9 14.5A12.2 12.2 0 0 0 22 21.5C17 23.5 10.5 21.5 9.5 16C9 12 11 10 13.5 10.5C10.5 6.5 3.5 6.5 0.9 12z" fill="#1b86dc"/><path d="M9.6 16.5C11 21 17 23 22 21.3C18 22 13 20 12 16z" fill="#1058ac"/><ellipse cx="11.8" cy="13.3" rx="2.6" ry="3.3" fill="#101010"/><path d="M12.5 16.8C15.5 19.5 21 19.2 25.2 15.8A12.2 12.2 0 0 1 22.8 20.2C18 21.5 14 20.5 12.5 16.8z" fill="#101010"/></svg>
<svg style="left:160px;top:736px;" width="25" height="25" viewBox="0 0 25 25"><circle cx="12.5" cy="12.5" r="12" fill="#db4437"/><path d="M12.5 12.5L2.1 18.5A12 12 0 0 0 15 24.3z" fill="#0f9d58"/><path d="M12.5 12.5L15 24.3A12 12 0 0 0 22.9 6.5L12.5 6.5z" fill="#ffcd40"/><circle cx="12.5" cy="12.5" r="5.5" fill="#fff"/><circle cx="12.5" cy="12.5" r="4.3" fill="#4285f4"/></svg>
<svg style="left:208px;top:736px;" width="26" height="24" viewBox="0 0 26 24"><rect x="7" y="0" width="19" height="23" rx="1.5" fill="#2b7cd3"/><rect x="7" y="11" width="19" height="6" fill="#185abd"/><rect x="7" y="17" width="19" height="6" fill="#103f91"/><rect x="7" y="5" width="19" height="6" fill="#41a5ee"/><rect x="0" y="5" width="14" height="14" rx="1" fill="#185abd"/><text x="1.5" y="16.5" font-family="Liberation Sans" font-weight="bold" font-size="11" fill="#fff">W</text></svg>
<svg style="left:258px;top:738px;" width="23" height="19" viewBox="0 0 23 19"><path d="M0 2h8l2 2h13v15H0z" fill="#f2c14e"/><rect x="0" y="5" width="23" height="14" fill="#ffd867"/><path d="M7 11h9v8h-2.5v-4.5h-4V19H7z" fill="#3b9be0"/></svg>
<div style="left:295px;top:728px;width:48px;height:40px;background:#333333"></div>
<div style="left:295px;top:765px;width:48px;height:3px;background:#76b9ed"></div>
<div style="left:250px;top:765px;width:40px;height:3px;background:#76b9ed"></div>
<svg style="left:306px;top:736px;" width="26" height="23" viewBox="0 0 26 23"><rect x="7" y="0" width="19" height="23" rx="1.5" fill="#21a366"/><rect x="7" y="11" width="19" height="12" fill="#107c41"/><rect x="16" y="0" width="10" height="11" fill="#33c481"/><rect x="16" y="11" width="10" height="6" fill="#21a366"/><rect x="16" y="17" width="10" height="6" fill="#185c37"/><rect x="0" y="5" width="13" height="13" rx="1" fill="#107c41"/><text x="2.5" y="15.5" font-family="Liberation Sans" font-weight="bold" font-size="10" fill="#fff">X</text></svg>
<svg style="left:356px;top:735px;" width="24" height="24" viewBox="0 0 24 24"><defs><radialGradient id="fg" cx="0.6" cy="0.3" r="0.8"><stop offset="0" stop-color="#ffe226"/><stop offset="0.45" stop-color="#ff7139"/><stop offset="1" stop-color="#e31587"/></radialGradient></defs><circle cx="12" cy="13" r="11" fill="url(#fg)"/><path d="M17 1c3 3 5 6 5 10c-2-3-4-4-5-4z" fill="#ffbd4f"/><circle cx="12" cy="13" r="5.3" fill="#7542e5"/><path d="M6 9c2-2 5-2 7-1" fill="none" stroke="#ff9640" stroke-width="2"/></svg>
<div style="left:397px;top:765px;width:40px;height:3px;background:#76b9ed"></div>
<svg style="left:405px;top:736px;" width="24" height="24" viewBox="0 0 24 24"><circle cx="12" cy="12" r="11.5" fill="#1ed760"/><path d="M5.5 8.5c4-1.3 9-1 13 1.2M6.5 12.3c3.5-1 7.5-.7 10.5 1M7.5 15.8c2.8-.7 5.5-.5 8 .8" fill="none" stroke="#111" stroke-width="1.8" stroke-linecap="round"/></svg>
<svg style="left:454px;top:736px;" width="25" height="25" viewBox="0 0 25 25"><circle cx="12.5" cy="12.5" r="12" fill="#db4437"/><path d="M12.5 12.5L2.1 18.5A12 12 0 0 0 15 24.3z" fill="#0f9d58"/><path d="M12.5 12.5L15 24.3A12 12 0 0 0 22.9 6.5L12.5 6.5z" fill="#ffcd40"/><circle cx="12.5" cy="12.5" r="5.5" fill="#fff"/><circle cx="12.5" cy="12.5" r="4.3" fill="#4285f4"/></svg>
<svg style="left:464px;top:746px;" width="16" height="16" viewBox="0 0 16 16"><circle cx="8" cy="8" r="7.8" fill="#aaa"/><circle cx="8" cy="8" r="5" fill="#ddd"/><path d="M3 6h10M4 10h8" stroke="#555" stroke-width="1.5"/><circle cx="5.5" cy="7.5" r="1.6" fill="#333"/><circle cx="10.5" cy="7.5" r="1.6" fill="#333"/></svg>
<div style="left:446px;top:765px;width:40px;height:3px;background:#76b9ed"></div>
<svg style="left:1093px;top:743px;" width="13" height="8" viewBox="0 0 13 8"><path d="M0.5 7.5l6-6.5l6 6.5" fill="none" stroke="#fff" stroke-width="1.2"/></svg>
<svg style="left:1117px;top:740px;" width="13" height="16" viewBox="0 0 13 16"><path d="M2 2.5q4.5-2 9 0M2 13.5q4.5 2 9 0" fill="none" stroke="#ddd" stroke-width="1"/><rect x="1" y="4.5" width="7.5" height="7" rx="1.5" fill="none" stroke="#fff" stroke-width="1.1"/><path d="M8.5 7l3.5-2v6l-3.5-2" fill="none" stroke="#fff" stroke-width="1.1"/></svg>
<svg style="left:1138px;top:740px;" width="18" height="17" viewBox="0 0 18 17"><path d="M1 3.5h15v10H1z" fill="none" stroke="#fff" stroke-width="1.1"/><path d="M1 3.5l3-3h12v10l-1 1" fill="none" stroke="#fff" stroke-width="1"/><path d="M5.5 9a3.5 3.5 0 0 1 6-2.5M11.5 7.5a3.5 3.5 0 0 1-6 2.5" fill="none" stroke="#fff" stroke-width="1"/><circle cx="14" cy="13.5" r="3" fill="#f7a21b"/></svg>
<svg style="left:1162px;top:741px;" width="18" height="14" viewBox="0 0 18 14"><rect x="4.5" y="3.5" width="13" height="8" fill="none" stroke="#fff" stroke-width="1.1"/><path d="M11 11.5v2M7.5 13.5h7" stroke="#fff" stroke-width="1.1"/><rect x="0.5" y="0.5" width="5" height="5" fill="#101010" stroke="#fff" stroke-width="1"/><path d="M3 5.5v8.5" stroke="#fff" stroke-width="1"/></svg>
<svg style="left:1186px;top:741px;" width="18" height="14" viewBox="0 0 18 14"><path d="M1 4.5h3l4-3.5v12l-4-3.5H1z" fill="none" stroke="#fff" stroke-width="1.1"/><path d="M10.5 4.5q1.5 2.5 0 5M13 2.8q2.5 4.2 0 8.4M15.5 1q3.5 6 0 12" fill="none" stroke="#ccc" stroke-width="1"/></svg>
<span style="left:1214.22px;top:742px;font-size:12px;line-height:12px;color:#fff;transform:scaleX(0.783);transform-origin:0 0;">ESP</span>
<span style="left:1260.07px;top:733px;font-size:12px;line-height:12px;color:#fff;transform:scaleX(0.931);transform-origin:0 0;">16:45</span>
<span style="left:1249.00px;top:751px;font-size:12px;line-height:12px;color:#fff;">11/5/2023</span>
<svg style="left:1318px;top:740px;" width="18" height="17" viewBox="0 0 18 17"><path d="M0.5 0.5h17v12h-6l-2.5 3l-2.5-3h-6z" fill="none" stroke="#fff" stroke-width="1.1"/></svg>
<div style="left:1355px;top:728px;width:1px;height:40px;background:#777"></div>
</div></body></html>
